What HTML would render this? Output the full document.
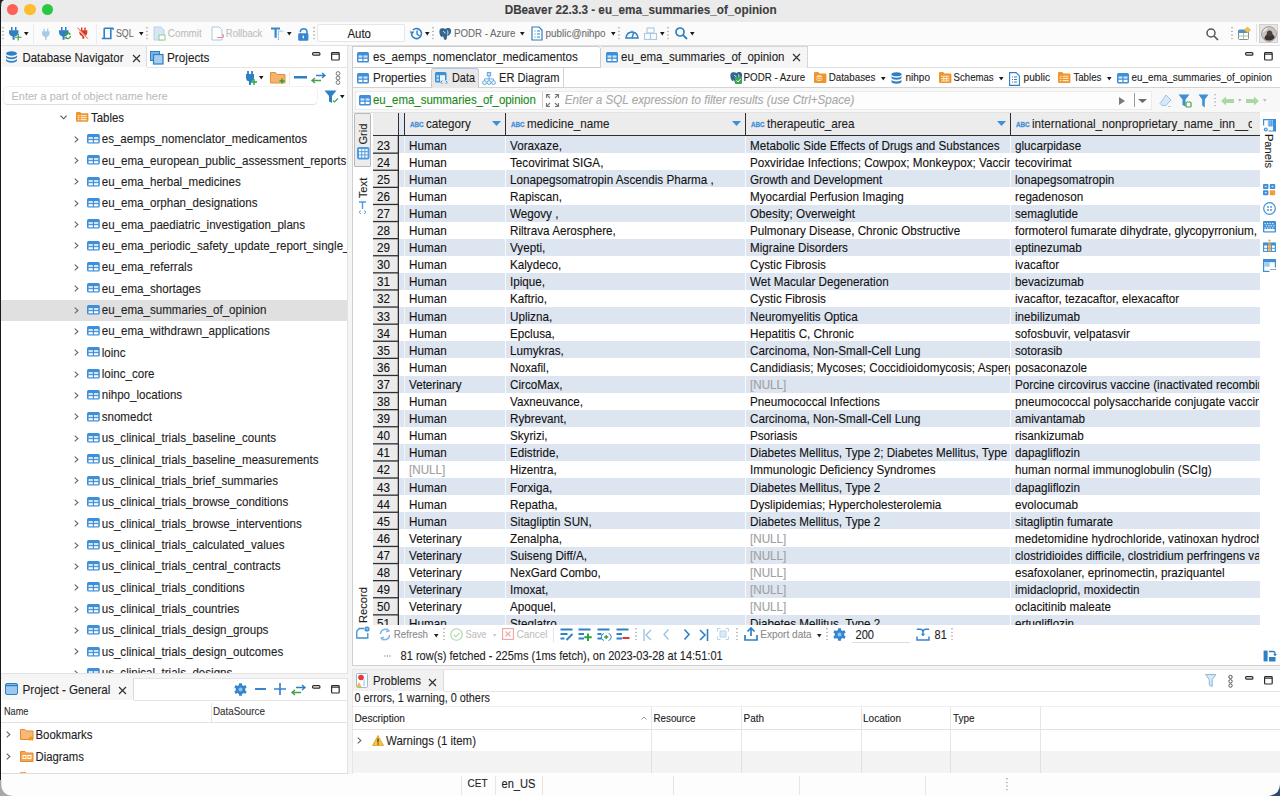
<!DOCTYPE html><html><head><meta charset="utf-8"><style>*{margin:0;padding:0}
html,body{width:1280px;height:796px;overflow:hidden;background:#efefef;font-family:"Liberation Sans",sans-serif;}
.a{position:absolute}
.t{position:absolute;white-space:nowrap;line-height:20px;height:20px;-webkit-text-stroke:0.1px currentColor;transform:scaleY(1.1);transform-origin:0 calc(10px + 0.3465em)}
svg{overflow:visible}
</style></head><body><div class="a" style="left:0px;top:0px;width:1280px;height:22px;background:#ebebeb;"></div>
<div class="a" style="left:7.3px;top:3.8px;width:11.2px;height:11.2px;border-radius:50%;background:#fe5f57;"></div>
<div class="a" style="left:24.4px;top:3.8px;width:11.2px;height:11.2px;border-radius:50%;background:#febc2e;"></div>
<div class="a" style="left:41.5px;top:3.8px;width:11.2px;height:11.2px;border-radius:50%;background:#28c840;"></div>
<div class="t" style="left:504.70px;top:-0.20px;font-size:11.71px;color:#3d3d3d;font-weight:bold;">DBeaver 22.3.3 - eu_ema_summaries_of_opinion</div>
<div class="a" style="left:0px;top:22px;width:1280px;height:23px;background:#fbfbfb;"></div>
<div class="a" style="left:0px;top:45px;width:1280px;height:1px;background:#e0e0e0;"></div>
<svg class="a" style="left:2px;top:27px;" width="2" height="13" viewBox="0 0 2 13"><circle cx="1" cy="0.8" r="0.7" fill="#8a8a8a"/><circle cx="1" cy="4.4" r="0.7" fill="#8a8a8a"/><circle cx="1" cy="8.0" r="0.7" fill="#8a8a8a"/><circle cx="1" cy="11.6" r="0.7" fill="#8a8a8a"/></svg>
<svg class="a" style="left:9px;top:26px;" width="12" height="14" viewBox="0 0 12 14"><rect x="2" y="1" width="1.5" height="3.5" fill="#2e7fc4"/><rect x="6" y="1" width="1.5" height="3.5" fill="#2e7fc4"/><path d="M0 4.2H9.5V6.3C9.5 8.6 7.8 10 5.6 10.6V13.7H3.6V10.6C1.4 10 0 8.6 0 6.3Z" fill="#2e7fc4"/></svg>
<svg class="a" style="left:14.5px;top:33.5px;" width="6.5" height="6.5" viewBox="0 0 6.5 6.5"><path d="M3.25 0v6.5M0 3.25h6.5" stroke="#3a9a3a" stroke-width="1.1"/></svg>
<svg class="a" style="left:24px;top:32px;" width="4.6" height="3.6" viewBox="0 0 4.6 3.6"><path d="M0 0H4.6L2.3 3.6Z" fill="#1a1a1a"/></svg>
<div class="a" style="left:33.3px;top:24.3px;width:1px;height:19.3px;background:#ececec;"></div>
<svg class="a" style="left:41.7px;top:27.5px;" width="8" height="12" viewBox="0 0 8 12"><rect x="1.5" y="0.5" width="1.3" height="3" fill="#a9cbe6"/><rect x="5" y="0.5" width="1.3" height="3" fill="#a9cbe6"/><path d="M0 3.2H7.6V5.5C7.6 7.4 6.3 8.6 4.6 9.1V11.8H3V9.1C1.3 8.6 0 7.4 0 5.5Z" fill="#a9cbe6"/></svg>
<svg class="a" style="left:59px;top:26px;" width="12" height="14" viewBox="0 0 12 14"><rect x="2" y="1" width="1.5" height="3.5" fill="#2e7fc4"/><rect x="6" y="1" width="1.5" height="3.5" fill="#2e7fc4"/><path d="M0 4.2H9.5V6.3C9.5 8.6 7.8 10 5.6 10.6V13.7H3.6V10.6C1.4 10 0 8.6 0 6.3Z" fill="#2e7fc4"/></svg>
<svg class="a" style="left:63.8px;top:32px;" width="7.5" height="7.5" viewBox="0 0 7.5 7.5"><path d="M1 3.5A2.8 2.8 0 0 1 6 2" fill="none" stroke="#3fa03f" stroke-width="1.3"/><path d="M6.5 4A2.8 2.8 0 0 1 1.5 5.5" fill="none" stroke="#3fa03f" stroke-width="1.3"/><path d="M5 0.5L7 2.2L4.6 3Z M2.5 7L0.5 5.3L2.9 4.5Z" fill="#3fa03f"/></svg>
<svg class="a" style="left:77px;top:27px;" width="11.5" height="12.5" viewBox="0 0 11.5 12.5"><rect x="4" y="0.5" width="1.4" height="3" fill="#d9381e"/><rect x="7.3" y="0.5" width="1.4" height="3" fill="#d9381e"/><path d="M2.3 3.2H10.3V5.6C10.3 7.6 8.9 8.8 7.3 9.3V11.8H5.4V9.3C3.7 8.8 2.3 7.6 2.3 5.6Z" fill="#d9381e"/><path d="M0.2 1L10.8 12" stroke="#fff" stroke-width="1.6"/><path d="M0.5 0.7L11 11.8" stroke="#d9381e" stroke-width="0.9"/></svg>
<div class="a" style="left:95.5px;top:24.3px;width:1px;height:19.3px;background:#ececec;"></div>
<svg class="a" style="left:101px;top:27px;" width="13" height="13" viewBox="0 0 13 13"><path d="M3.2 1.2H12.2M3.2 1.2V11.5M9.8 1.2V11.5H0.8" fill="none" stroke="#2e7fc4" stroke-width="1.6"/><path d="M12.2 1.2V2.8" stroke="#2e7fc4" stroke-width="1.6"/></svg>
<div class="t" style="left:116.00px;top:23.50px;font-size:8.75px;color:#6e6e6e;transform:scaleY(1.18);">SQL</div>
<svg class="a" style="left:139px;top:32px;" width="4.6" height="3.6" viewBox="0 0 4.6 3.6"><path d="M0 0H4.6L2.3 3.6Z" fill="#1a1a1a"/></svg>
<svg class="a" style="left:146px;top:27px;" width="2" height="13" viewBox="0 0 2 13"><circle cx="1" cy="0.8" r="0.7" fill="#8a8a8a"/><circle cx="1" cy="4.4" r="0.7" fill="#8a8a8a"/><circle cx="1" cy="8.0" r="0.7" fill="#8a8a8a"/><circle cx="1" cy="11.6" r="0.7" fill="#8a8a8a"/></svg>
<svg class="a" style="left:153px;top:26px;" width="13" height="15" viewBox="0 0 13 15"><path d="M1 1h7l3 3v10H1z" fill="#d6e6f5" stroke="#b8d2ea" stroke-width="1"/><rect x="6" y="9" width="6" height="5" fill="#fff" stroke="#8fd08f" stroke-width="1"/></svg>
<div class="t" style="left:167.80px;top:23.50px;font-size:9.87px;color:#bdbdbd;transform:scaleY(1.15);">Commit</div>
<svg class="a" style="left:211px;top:26px;" width="13" height="15" viewBox="0 0 13 15"><path d="M1 1h7l3 3v10H1z" fill="#fff" stroke="#a9c9e6" stroke-width="1"/><path d="M6 11.5h5a1.5 1.5 0 0 0 0-3" fill="none" stroke="#e58a8a" stroke-width="1.2"/></svg>
<div class="t" style="left:225.80px;top:23.50px;font-size:9.54px;color:#bdbdbd;transform:scaleY(1.15);">Rollback</div>
<svg class="a" style="left:271px;top:26.5px;" width="13" height="14" viewBox="0 0 13 14"><path d="M0 0.6H9V2.6H5.7V10.8H3.5V2.6H0Z" fill="#3585cf"/><path d="M7.4 3.7v9.5" stroke="#3585cf" stroke-width="0.9" stroke-dasharray="0.9 0.8"/><path d="M8.6 4.1H12.3" stroke="#3585cf" stroke-width="0.9" stroke-dasharray="0.9 0.8"/></svg>
<svg class="a" style="left:287px;top:32px;" width="4.6" height="3.6" viewBox="0 0 4.6 3.6"><path d="M0 0H4.6L2.3 3.6Z" fill="#1a1a1a"/></svg>
<svg class="a" style="left:297.8px;top:26.5px;" width="11" height="14" viewBox="0 0 11 14"><path d="M2.3 5.2V4.6A3.4 3.4 0 0 1 9 4.6V7" fill="none" stroke="#3585cf" stroke-width="1.5"/><rect x="0.2" y="6.3" width="10.2" height="7.4" rx="1.3" fill="#3585cf"/><rect x="4.6" y="8.4" width="1.4" height="3" rx="0.6" fill="#e8f4fd"/></svg>
<svg class="a" style="left:313px;top:27px;" width="2" height="13" viewBox="0 0 2 13"><circle cx="1" cy="0.8" r="0.7" fill="#8a8a8a"/><circle cx="1" cy="4.4" r="0.7" fill="#8a8a8a"/><circle cx="1" cy="8.0" r="0.7" fill="#8a8a8a"/><circle cx="1" cy="11.6" r="0.7" fill="#8a8a8a"/></svg>
<div class="a" style="left:317px;top:24px;width:88px;height:18px;background:#fff;border:1px solid #e6e6e6;box-sizing:border-box;border-radius:2px;"></div>
<div class="t" style="left:347.50px;top:23.50px;font-size:11.42px;color:#1a1a1a;">Auto</div>
<svg class="a" style="left:408.5px;top:27px;" width="14" height="13" viewBox="0 0 14 13"><path d="M2.5 6.5A5 5 0 1 0 4 3" fill="none" stroke="#2e7fc4" stroke-width="1.6"/><path d="M0.5 4.5L3 7.5L5.5 4.5Z" fill="#2e7fc4"/><path d="M8 3.5v3.5l2.5 2" fill="none" stroke="#2e7fc4" stroke-width="1.4"/></svg>
<svg class="a" style="left:425px;top:32px;" width="4.6" height="3.6" viewBox="0 0 4.6 3.6"><path d="M0 0H4.6L2.3 3.6Z" fill="#1a1a1a"/></svg>
<svg class="a" style="left:432px;top:27px;" width="2" height="13" viewBox="0 0 2 13"><circle cx="1" cy="0.8" r="0.7" fill="#8a8a8a"/><circle cx="1" cy="4.4" r="0.7" fill="#8a8a8a"/><circle cx="1" cy="8.0" r="0.7" fill="#8a8a8a"/><circle cx="1" cy="11.6" r="0.7" fill="#8a8a8a"/></svg>
<svg class="a" style="left:439px;top:26.5px;" width="13" height="14" viewBox="0 0 13 14"><path d="M2 1.5C0 2 0 6 1.5 9C2.5 11 3.5 10 4 8.5C4.5 11 5 13 6.5 13C8 13 8 10 8 8.5C9.5 9 11 8 12 5.5C12.5 3 11.5 1 9.5 1C8 1 7 1.5 6.5 2C5.5 1 3.5 1 2 1.5Z" fill="#336791"/><path d="M4 4.5c1 0 2 .5 2 2M8.5 3.5c.5 1.5.5 3 0 4" stroke="#fff" stroke-width="0.9" fill="none"/></svg>
<div class="t" style="left:454.00px;top:23.50px;font-size:9.71px;color:#6e6e6e;transform:scaleY(1.15);">PODR - Azure</div>
<svg class="a" style="left:520px;top:32px;" width="4.6" height="3.6" viewBox="0 0 4.6 3.6"><path d="M0 0H4.6L2.3 3.6Z" fill="#1a1a1a"/></svg>
<svg class="a" style="left:530.5px;top:26px;" width="12" height="15" viewBox="0 0 12 15"><path d="M1 1h7l3 3v10H1z" fill="#fff" stroke="#2e7fc4" stroke-width="1.2"/><path d="M3.5 5h1M3.5 8h1M3.5 11h1M6 5h3M6 8h3M6 11h3" stroke="#2e7fc4" stroke-width="1.2"/></svg>
<div class="t" style="left:545.60px;top:23.50px;font-size:9.88px;color:#6e6e6e;transform:scaleY(1.15);">public@nihpo</div>
<svg class="a" style="left:611px;top:32px;" width="4.6" height="3.6" viewBox="0 0 4.6 3.6"><path d="M0 0H4.6L2.3 3.6Z" fill="#1a1a1a"/></svg>
<svg class="a" style="left:618px;top:27px;" width="2" height="13" viewBox="0 0 2 13"><circle cx="1" cy="0.8" r="0.7" fill="#8a8a8a"/><circle cx="1" cy="4.4" r="0.7" fill="#8a8a8a"/><circle cx="1" cy="8.0" r="0.7" fill="#8a8a8a"/><circle cx="1" cy="11.6" r="0.7" fill="#8a8a8a"/></svg>
<svg class="a" style="left:624.5px;top:27px;" width="14" height="12" viewBox="0 0 14 12"><path d="M1 11A6 6 0 1 1 13 11Z" fill="none" stroke="#2e7fc4" stroke-width="1.6"/><path d="M7 11L8.5 6" stroke="#2e7fc4" stroke-width="1.4"/><path d="M7 3.5v1M3 5.5l.8.8M11 5.5l-.8.8" stroke="#2e7fc4" stroke-width="1"/></svg>
<svg class="a" style="left:644px;top:27px;" width="13" height="13" viewBox="0 0 13 13"><rect x="3" y="1" width="7" height="5" fill="none" stroke="#a9c9e6" stroke-width="1.1"/><rect x="0.5" y="6.5" width="6" height="6" fill="none" stroke="#a9c9e6" stroke-width="1.1"/><rect x="6.5" y="6.5" width="6" height="6" fill="none" stroke="#a9c9e6" stroke-width="1.1"/></svg>
<svg class="a" style="left:660px;top:32px;" width="4.6" height="3.6" viewBox="0 0 4.6 3.6"><path d="M0 0H4.6L2.3 3.6Z" fill="#1a1a1a"/></svg>
<svg class="a" style="left:667px;top:27px;" width="2" height="13" viewBox="0 0 2 13"><circle cx="1" cy="0.8" r="0.7" fill="#8a8a8a"/><circle cx="1" cy="4.4" r="0.7" fill="#8a8a8a"/><circle cx="1" cy="8.0" r="0.7" fill="#8a8a8a"/><circle cx="1" cy="11.6" r="0.7" fill="#8a8a8a"/></svg>
<svg class="a" style="left:674.5px;top:27px;" width="13" height="13" viewBox="0 0 13 13"><circle cx="5" cy="5" r="4" fill="none" stroke="#2e7fc4" stroke-width="1.7"/><path d="M8 8L12 12" stroke="#2e7fc4" stroke-width="1.8"/></svg>
<svg class="a" style="left:690px;top:32px;" width="4.6" height="3.6" viewBox="0 0 4.6 3.6"><path d="M0 0H4.6L2.3 3.6Z" fill="#1a1a1a"/></svg>
<svg class="a" style="left:1205.5px;top:27.5px;" width="13" height="13" viewBox="0 0 13 13"><circle cx="5" cy="5" r="4" fill="none" stroke="#555" stroke-width="1.5"/><path d="M8 8L12 12" stroke="#555" stroke-width="1.7"/></svg>
<svg class="a" style="left:1231px;top:27px;" width="2" height="13" viewBox="0 0 2 13"><circle cx="1" cy="0.8" r="0.7" fill="#8a8a8a"/><circle cx="1" cy="4.4" r="0.7" fill="#8a8a8a"/><circle cx="1" cy="8.0" r="0.7" fill="#8a8a8a"/><circle cx="1" cy="11.6" r="0.7" fill="#8a8a8a"/></svg>
<svg class="a" style="left:1238px;top:27px;" width="13" height="13" viewBox="0 0 13 13"><rect x="0.5" y="3" width="10" height="9.5" rx="1" fill="#fff" stroke="#888" stroke-width="1"/><rect x="0.5" y="3" width="10" height="3" fill="#4a90d9"/><path d="M0.5 9h10M5.5 6v6.5" stroke="#9c9" stroke-width="1"/><path d="M9.5 0L12.5 3L9.5 6L6.5 3Z" fill="#f3c04c" stroke="#d9a02a" stroke-width="0.6"/></svg>
<div class="a" style="left:1256px;top:24px;width:1px;height:18px;background:#e2e2e2;"></div>
<div class="a" style="left:1259px;top:24px;width:18.5px;height:18.5px;background:#e6e6e6;border:1px solid #d0d0d0;box-sizing:border-box;"></div>
<svg class="a" style="left:1260.5px;top:25.5px;" width="16" height="16" viewBox="0 0 16 16"><defs><clipPath id="av"><circle cx="8" cy="8" r="6.6"/></clipPath></defs><circle cx="8" cy="8" r="7.4" fill="#d8d4d2" stroke="#8a8280" stroke-width="0.8"/><g clip-path="url(#av)"><rect width="16" height="16" fill="#c9c2bf"/><path d="M3 16C3 11 5 8 8 7.5C11 7 13 9 14 12V16Z" fill="#3b3230"/><path d="M6 9C5 6 7 4 9 4.5C11 5 12 7 11 9.5C10 11 7 11 6 9Z" fill="#4a403c"/><path d="M2 6L6 2" stroke="#f4f0ee" stroke-width="1.5"/></g></svg>
<div class="a" style="left:0px;top:46px;width:1280px;height:750px;background:#f5f5f5;"></div>
<div class="a" style="left:0px;top:0px;width:1.3px;height:796px;background:#1a1a1a;"></div>
<div class="a" style="left:1.3px;top:45.5px;width:346.5px;height:628px;background:#fff;border-right:1px solid #e2e2e2;border-bottom:1px solid #e2e2e2;box-sizing:border-box;"></div>
<div class="a" style="left:2px;top:45.5px;width:144px;height:21.5px;background:#f6f6f6;"></div>
<div class="a" style="left:146px;top:46px;width:1px;height:21px;background:#dcdcdc;"></div>
<div class="a" style="left:147px;top:66.5px;width:200px;height:1px;background:#e4e4e4;"></div>
<svg class="a" style="left:5px;top:50.5px;" width="13" height="13" viewBox="0 0 13 13"><g fill="#2e7fc4"><ellipse cx="6.5" cy="2.5" rx="5.5" ry="2.2"/><path d="M1 4.2c0 1.2 2.5 2.2 5.5 2.2s5.5-1 5.5-2.2v1.8c0 1.2-2.5 2.2-5.5 2.2S1 7.2 1 6z"/><path d="M1 7.8c0 1.2 2.5 2.2 5.5 2.2s5.5-1 5.5-2.2v1.8c0 1.2-2.5 2.2-5.5 2.2S1 10.8 1 9.6z"/></g></svg>
<div class="t" style="left:22.50px;top:47.50px;font-size:11.43px;color:#1e1e1e;">Database Navigator</div>
<svg class="a" style="left:131.5px;top:54px;" width="9" height="9" viewBox="0 0 9 9"><path d="M1 1L8 8M8 1L1 8" stroke="#333" stroke-width="1.2"/></svg>
<svg class="a" style="left:150px;top:50.5px;" width="14" height="14" viewBox="0 0 14 14"><rect x="0.5" y="0.5" width="9" height="9" fill="#7fb4e3" stroke="#2e7fc4" stroke-width="1"/><rect x="3.5" y="3.5" width="9.5" height="9.5" fill="#a8cdef" stroke="#2e7fc4" stroke-width="1.2"/></svg>
<div class="t" style="left:167.00px;top:47.50px;font-size:11.77px;color:#1e1e1e;">Projects</div>
<svg class="a" style="left:312px;top:52px;" width="8.5" height="3.8" viewBox="0 0 8.5 3.8"><rect x="0.6" y="0.6" width="7.3" height="2.6" rx="1" fill="none" stroke="#2a2a2a" stroke-width="1.2"/></svg>
<svg class="a" style="left:331px;top:52px;" width="8.8" height="8.6" viewBox="0 0 8.8 8.6"><rect x="0.6" y="0.6" width="7.6" height="7.4" rx="0.8" fill="none" stroke="#2a2a2a" stroke-width="1.2"/><path d="M0.6 2.2h7.6" stroke="#2a2a2a" stroke-width="1.1"/></svg>
<svg class="a" style="left:245px;top:70.5px;" width="12" height="14" viewBox="0 0 12 14"><path d="M3 0v3M7 0v3" stroke="#2e7fc4" stroke-width="1.8"/><path d="M1 3h8v3.5a4 4 0 0 1-8 0z" fill="#2e7fc4"/><rect x="4" y="10" width="2" height="4" fill="#2e7fc4"/><path d="M9 8v6M6 11h6" stroke="#27a33b" stroke-width="1.4"/></svg>
<svg class="a" style="left:258.5px;top:75.5px;" width="4.5" height="3.5" viewBox="0 0 4.5 3.5"><path d="M0 0H4.5L2.25 3.5Z" fill="#1a1a1a"/></svg>
<svg class="a" style="left:269.5px;top:71px;" width="16" height="13" viewBox="0 0 16 13"><path d="M0.5 1.5h5l1.5 2h8v8.5H0.5z" fill="#f6b26b" stroke="#e69138" stroke-width="1"/><path d="M12 7.5v5M9.5 10h5" stroke="#27a33b" stroke-width="1.4"/></svg>
<div class="a" style="left:289px;top:71px;width:1px;height:14px;background:#e8e8e8;"></div>
<svg class="a" style="left:293.5px;top:76px;" width="13" height="3" viewBox="0 0 13 3"><rect width="13" height="2.5" fill="#2e7fc4"/></svg>
<svg class="a" style="left:311px;top:71.5px;" width="15" height="12" viewBox="0 0 15 12"><path d="M5 3.5h9M11 1l3 2.5L11 6" fill="none" stroke="#2e7fc4" stroke-width="1.4"/><path d="M10 8.5H1M4 6l-3 2.5L4 11" fill="none" stroke="#43a047" stroke-width="1.4"/></svg>
<svg class="a" style="left:334.5px;top:70.5px;" width="6" height="14" viewBox="0 0 6 14"><circle cx="3" cy="2.5" r="1.9" fill="none" stroke="#777" stroke-width="1"/><circle cx="3" cy="7" r="1.9" fill="none" stroke="#777" stroke-width="1"/><circle cx="3" cy="11.5" r="1.9" fill="none" stroke="#777" stroke-width="1"/></svg>
<div class="a" style="left:3.5px;top:87.3px;width:313px;height:16.6px;background:#fff;border-radius:4px;box-shadow:0 0 0 0.6px #e8e8e8, 0 0.8px 0.8px rgba(0,0,0,0.16);"></div>
<div class="t" style="left:11.60px;top:85.60px;font-size:10.88px;color:#bdbdbd;transform:scaleY(1.0);">Enter a part of object name here</div>
<svg class="a" style="left:324px;top:89.5px;" width="16" height="14" viewBox="0 0 16 14"><path d="M0.5 0.5h12L8 6v7L5 11.5V6z" fill="#2e7fc4"/><path d="M9 10.5l1.5 1.5L14 8.5" fill="none" stroke="#43a047" stroke-width="1.1"/></svg>
<svg class="a" style="left:340px;top:95px;" width="4.5" height="3.5" viewBox="0 0 4.5 3.5"><path d="M0 0H4.5L2.25 3.5Z" fill="#1a1a1a"/></svg>
<svg class="a" style="left:60.3px;top:115.3px;" width="7.5" height="5" viewBox="0 0 7.5 5"><path d="M0.6 0.6L3.6 3.8L6.6 0.6" fill="none" stroke="#555" stroke-width="1.1"/></svg>
<svg class="a" style="left:75.9px;top:112.2px;" width="12.4" height="9.8" viewBox="0 0 12.4 9.8"><path d="M0 1.2Q0 0 1.2 0H4.2L5.4 1.3H11.2Q12.4 1.3 12.4 2.5V8.6Q12.4 9.8 11.2 9.8H1.2Q0 9.8 0 8.6Z" fill="#f0952c"/><path d="M1.8 3.6h1.6M1.8 5.6h1.6M1.8 7.6h1.6M4.6 3.6h6M4.6 5.6h6M4.6 7.6h6" stroke="#fde6c8" stroke-width="1.1"/></svg>
<div class="t" style="left:91.00px;top:107.80px;font-size:11.42px;color:#1e1e1e;">Tables</div>
<div class="a" style="left:1.3px;top:106px;width:345.5px;height:567px;overflow:hidden;">
<svg class="a" style="left:72.4px;top:29.659999999999997px;" width="6" height="7" viewBox="0 0 6 7"><path d="M0.7 0.6L3.9 3.5L0.7 6.4" fill="none" stroke="#666" stroke-width="1.1"/></svg>
<svg class="a" style="left:85.7px;top:27.859999999999996px;" width="12.8" height="9.5" viewBox="0 0 12.8 9.5"><rect x="0" y="0" width="12.8" height="9.5" rx="1.5" fill="#3f8fd8"/><rect x="1.5" y="3" width="4.3" height="2.1" fill="#cfe5f7"/><rect x="7" y="3" width="4.3" height="2.1" fill="#cfe5f7"/><rect x="1.5" y="6.2" width="4.3" height="2.1" fill="#fff"/><rect x="7" y="6.2" width="4.3" height="2.1" fill="#fff"/></svg>
<div class="t" style="left:100.40px;top:23.16px;font-size:11.58px;color:#1e1e1e;white-space:nowrap;">es_aemps_nomenclator_medicamentos</div>
<svg class="a" style="left:72.4px;top:51.01999999999998px;" width="6" height="7" viewBox="0 0 6 7"><path d="M0.7 0.6L3.9 3.5L0.7 6.4" fill="none" stroke="#666" stroke-width="1.1"/></svg>
<svg class="a" style="left:85.7px;top:49.219999999999985px;" width="12.8" height="9.5" viewBox="0 0 12.8 9.5"><rect x="0" y="0" width="12.8" height="9.5" rx="1.5" fill="#3f8fd8"/><rect x="1.5" y="3" width="4.3" height="2.1" fill="#cfe5f7"/><rect x="7" y="3" width="4.3" height="2.1" fill="#cfe5f7"/><rect x="1.5" y="6.2" width="4.3" height="2.1" fill="#fff"/><rect x="7" y="6.2" width="4.3" height="2.1" fill="#fff"/></svg>
<div class="t" style="left:100.40px;top:44.52px;font-size:11.58px;color:#1e1e1e;white-space:nowrap;">eu_ema_european_public_assessment_reports</div>
<svg class="a" style="left:72.4px;top:72.38px;" width="6" height="7" viewBox="0 0 6 7"><path d="M0.7 0.6L3.9 3.5L0.7 6.4" fill="none" stroke="#666" stroke-width="1.1"/></svg>
<svg class="a" style="left:85.7px;top:70.58px;" width="12.8" height="9.5" viewBox="0 0 12.8 9.5"><rect x="0" y="0" width="12.8" height="9.5" rx="1.5" fill="#3f8fd8"/><rect x="1.5" y="3" width="4.3" height="2.1" fill="#cfe5f7"/><rect x="7" y="3" width="4.3" height="2.1" fill="#cfe5f7"/><rect x="1.5" y="6.2" width="4.3" height="2.1" fill="#fff"/><rect x="7" y="6.2" width="4.3" height="2.1" fill="#fff"/></svg>
<div class="t" style="left:100.40px;top:65.88px;font-size:11.58px;color:#1e1e1e;white-space:nowrap;">eu_ema_herbal_medicines</div>
<svg class="a" style="left:72.4px;top:93.74000000000001px;" width="6" height="7" viewBox="0 0 6 7"><path d="M0.7 0.6L3.9 3.5L0.7 6.4" fill="none" stroke="#666" stroke-width="1.1"/></svg>
<svg class="a" style="left:85.7px;top:91.94000000000001px;" width="12.8" height="9.5" viewBox="0 0 12.8 9.5"><rect x="0" y="0" width="12.8" height="9.5" rx="1.5" fill="#3f8fd8"/><rect x="1.5" y="3" width="4.3" height="2.1" fill="#cfe5f7"/><rect x="7" y="3" width="4.3" height="2.1" fill="#cfe5f7"/><rect x="1.5" y="6.2" width="4.3" height="2.1" fill="#fff"/><rect x="7" y="6.2" width="4.3" height="2.1" fill="#fff"/></svg>
<div class="t" style="left:100.40px;top:87.24px;font-size:11.58px;color:#1e1e1e;white-space:nowrap;">eu_ema_orphan_designations</div>
<svg class="a" style="left:72.4px;top:115.1px;" width="6" height="7" viewBox="0 0 6 7"><path d="M0.7 0.6L3.9 3.5L0.7 6.4" fill="none" stroke="#666" stroke-width="1.1"/></svg>
<svg class="a" style="left:85.7px;top:113.3px;" width="12.8" height="9.5" viewBox="0 0 12.8 9.5"><rect x="0" y="0" width="12.8" height="9.5" rx="1.5" fill="#3f8fd8"/><rect x="1.5" y="3" width="4.3" height="2.1" fill="#cfe5f7"/><rect x="7" y="3" width="4.3" height="2.1" fill="#cfe5f7"/><rect x="1.5" y="6.2" width="4.3" height="2.1" fill="#fff"/><rect x="7" y="6.2" width="4.3" height="2.1" fill="#fff"/></svg>
<div class="t" style="left:100.40px;top:108.60px;font-size:11.58px;color:#1e1e1e;white-space:nowrap;">eu_ema_paediatric_investigation_plans</div>
<svg class="a" style="left:72.4px;top:136.45999999999998px;" width="6" height="7" viewBox="0 0 6 7"><path d="M0.7 0.6L3.9 3.5L0.7 6.4" fill="none" stroke="#666" stroke-width="1.1"/></svg>
<svg class="a" style="left:85.7px;top:134.65999999999997px;" width="12.8" height="9.5" viewBox="0 0 12.8 9.5"><rect x="0" y="0" width="12.8" height="9.5" rx="1.5" fill="#3f8fd8"/><rect x="1.5" y="3" width="4.3" height="2.1" fill="#cfe5f7"/><rect x="7" y="3" width="4.3" height="2.1" fill="#cfe5f7"/><rect x="1.5" y="6.2" width="4.3" height="2.1" fill="#fff"/><rect x="7" y="6.2" width="4.3" height="2.1" fill="#fff"/></svg>
<div class="t" style="left:100.40px;top:129.96px;font-size:11.58px;color:#1e1e1e;white-space:nowrap;">eu_ema_periodic_safety_update_report_single_assessments</div>
<svg class="a" style="left:72.4px;top:157.82px;" width="6" height="7" viewBox="0 0 6 7"><path d="M0.7 0.6L3.9 3.5L0.7 6.4" fill="none" stroke="#666" stroke-width="1.1"/></svg>
<svg class="a" style="left:85.7px;top:156.01999999999998px;" width="12.8" height="9.5" viewBox="0 0 12.8 9.5"><rect x="0" y="0" width="12.8" height="9.5" rx="1.5" fill="#3f8fd8"/><rect x="1.5" y="3" width="4.3" height="2.1" fill="#cfe5f7"/><rect x="7" y="3" width="4.3" height="2.1" fill="#cfe5f7"/><rect x="1.5" y="6.2" width="4.3" height="2.1" fill="#fff"/><rect x="7" y="6.2" width="4.3" height="2.1" fill="#fff"/></svg>
<div class="t" style="left:100.40px;top:151.32px;font-size:11.58px;color:#1e1e1e;white-space:nowrap;">eu_ema_referrals</div>
<svg class="a" style="left:72.4px;top:179.18px;" width="6" height="7" viewBox="0 0 6 7"><path d="M0.7 0.6L3.9 3.5L0.7 6.4" fill="none" stroke="#666" stroke-width="1.1"/></svg>
<svg class="a" style="left:85.7px;top:177.38px;" width="12.8" height="9.5" viewBox="0 0 12.8 9.5"><rect x="0" y="0" width="12.8" height="9.5" rx="1.5" fill="#3f8fd8"/><rect x="1.5" y="3" width="4.3" height="2.1" fill="#cfe5f7"/><rect x="7" y="3" width="4.3" height="2.1" fill="#cfe5f7"/><rect x="1.5" y="6.2" width="4.3" height="2.1" fill="#fff"/><rect x="7" y="6.2" width="4.3" height="2.1" fill="#fff"/></svg>
<div class="t" style="left:100.40px;top:172.68px;font-size:11.58px;color:#1e1e1e;white-space:nowrap;">eu_ema_shortages</div>
<div class="a" style="left:0px;top:194.44px;width:345.5px;height:20.6px;background:#e0e0e0;"></div>
<svg class="a" style="left:72.4px;top:200.54000000000002px;" width="6" height="7" viewBox="0 0 6 7"><path d="M0.7 0.6L3.9 3.5L0.7 6.4" fill="none" stroke="#666" stroke-width="1.1"/></svg>
<svg class="a" style="left:85.7px;top:198.74px;" width="12.8" height="9.5" viewBox="0 0 12.8 9.5"><rect x="0" y="0" width="12.8" height="9.5" rx="1.5" fill="#3f8fd8"/><rect x="1.5" y="3" width="4.3" height="2.1" fill="#cfe5f7"/><rect x="7" y="3" width="4.3" height="2.1" fill="#cfe5f7"/><rect x="1.5" y="6.2" width="4.3" height="2.1" fill="#fff"/><rect x="7" y="6.2" width="4.3" height="2.1" fill="#fff"/></svg>
<div class="t" style="left:100.40px;top:194.04px;font-size:11.58px;color:#1e1e1e;white-space:nowrap;">eu_ema_summaries_of_opinion</div>
<svg class="a" style="left:72.4px;top:221.89999999999998px;" width="6" height="7" viewBox="0 0 6 7"><path d="M0.7 0.6L3.9 3.5L0.7 6.4" fill="none" stroke="#666" stroke-width="1.1"/></svg>
<svg class="a" style="left:85.7px;top:220.09999999999997px;" width="12.8" height="9.5" viewBox="0 0 12.8 9.5"><rect x="0" y="0" width="12.8" height="9.5" rx="1.5" fill="#3f8fd8"/><rect x="1.5" y="3" width="4.3" height="2.1" fill="#cfe5f7"/><rect x="7" y="3" width="4.3" height="2.1" fill="#cfe5f7"/><rect x="1.5" y="6.2" width="4.3" height="2.1" fill="#fff"/><rect x="7" y="6.2" width="4.3" height="2.1" fill="#fff"/></svg>
<div class="t" style="left:100.40px;top:215.40px;font-size:11.58px;color:#1e1e1e;white-space:nowrap;">eu_ema_withdrawn_applications</div>
<svg class="a" style="left:72.4px;top:243.26px;" width="6" height="7" viewBox="0 0 6 7"><path d="M0.7 0.6L3.9 3.5L0.7 6.4" fill="none" stroke="#666" stroke-width="1.1"/></svg>
<svg class="a" style="left:85.7px;top:241.45999999999998px;" width="12.8" height="9.5" viewBox="0 0 12.8 9.5"><rect x="0" y="0" width="12.8" height="9.5" rx="1.5" fill="#3f8fd8"/><rect x="1.5" y="3" width="4.3" height="2.1" fill="#cfe5f7"/><rect x="7" y="3" width="4.3" height="2.1" fill="#cfe5f7"/><rect x="1.5" y="6.2" width="4.3" height="2.1" fill="#fff"/><rect x="7" y="6.2" width="4.3" height="2.1" fill="#fff"/></svg>
<div class="t" style="left:100.40px;top:236.76px;font-size:11.58px;color:#1e1e1e;white-space:nowrap;">loinc</div>
<svg class="a" style="left:72.4px;top:264.62px;" width="6" height="7" viewBox="0 0 6 7"><path d="M0.7 0.6L3.9 3.5L0.7 6.4" fill="none" stroke="#666" stroke-width="1.1"/></svg>
<svg class="a" style="left:85.7px;top:262.82px;" width="12.8" height="9.5" viewBox="0 0 12.8 9.5"><rect x="0" y="0" width="12.8" height="9.5" rx="1.5" fill="#3f8fd8"/><rect x="1.5" y="3" width="4.3" height="2.1" fill="#cfe5f7"/><rect x="7" y="3" width="4.3" height="2.1" fill="#cfe5f7"/><rect x="1.5" y="6.2" width="4.3" height="2.1" fill="#fff"/><rect x="7" y="6.2" width="4.3" height="2.1" fill="#fff"/></svg>
<div class="t" style="left:100.40px;top:258.12px;font-size:11.58px;color:#1e1e1e;white-space:nowrap;">loinc_core</div>
<svg class="a" style="left:72.4px;top:285.98px;" width="6" height="7" viewBox="0 0 6 7"><path d="M0.7 0.6L3.9 3.5L0.7 6.4" fill="none" stroke="#666" stroke-width="1.1"/></svg>
<svg class="a" style="left:85.7px;top:284.18px;" width="12.8" height="9.5" viewBox="0 0 12.8 9.5"><rect x="0" y="0" width="12.8" height="9.5" rx="1.5" fill="#3f8fd8"/><rect x="1.5" y="3" width="4.3" height="2.1" fill="#cfe5f7"/><rect x="7" y="3" width="4.3" height="2.1" fill="#cfe5f7"/><rect x="1.5" y="6.2" width="4.3" height="2.1" fill="#fff"/><rect x="7" y="6.2" width="4.3" height="2.1" fill="#fff"/></svg>
<div class="t" style="left:100.40px;top:279.48px;font-size:11.58px;color:#1e1e1e;white-space:nowrap;">nihpo_locations</div>
<svg class="a" style="left:72.4px;top:307.34px;" width="6" height="7" viewBox="0 0 6 7"><path d="M0.7 0.6L3.9 3.5L0.7 6.4" fill="none" stroke="#666" stroke-width="1.1"/></svg>
<svg class="a" style="left:85.7px;top:305.53999999999996px;" width="12.8" height="9.5" viewBox="0 0 12.8 9.5"><rect x="0" y="0" width="12.8" height="9.5" rx="1.5" fill="#3f8fd8"/><rect x="1.5" y="3" width="4.3" height="2.1" fill="#cfe5f7"/><rect x="7" y="3" width="4.3" height="2.1" fill="#cfe5f7"/><rect x="1.5" y="6.2" width="4.3" height="2.1" fill="#fff"/><rect x="7" y="6.2" width="4.3" height="2.1" fill="#fff"/></svg>
<div class="t" style="left:100.40px;top:300.84px;font-size:11.58px;color:#1e1e1e;white-space:nowrap;">snomedct</div>
<svg class="a" style="left:72.4px;top:328.7px;" width="6" height="7" viewBox="0 0 6 7"><path d="M0.7 0.6L3.9 3.5L0.7 6.4" fill="none" stroke="#666" stroke-width="1.1"/></svg>
<svg class="a" style="left:85.7px;top:326.9px;" width="12.8" height="9.5" viewBox="0 0 12.8 9.5"><rect x="0" y="0" width="12.8" height="9.5" rx="1.5" fill="#3f8fd8"/><rect x="1.5" y="3" width="4.3" height="2.1" fill="#cfe5f7"/><rect x="7" y="3" width="4.3" height="2.1" fill="#cfe5f7"/><rect x="1.5" y="6.2" width="4.3" height="2.1" fill="#fff"/><rect x="7" y="6.2" width="4.3" height="2.1" fill="#fff"/></svg>
<div class="t" style="left:100.40px;top:322.20px;font-size:11.58px;color:#1e1e1e;white-space:nowrap;">us_clinical_trials_baseline_counts</div>
<svg class="a" style="left:72.4px;top:350.06px;" width="6" height="7" viewBox="0 0 6 7"><path d="M0.7 0.6L3.9 3.5L0.7 6.4" fill="none" stroke="#666" stroke-width="1.1"/></svg>
<svg class="a" style="left:85.7px;top:348.26px;" width="12.8" height="9.5" viewBox="0 0 12.8 9.5"><rect x="0" y="0" width="12.8" height="9.5" rx="1.5" fill="#3f8fd8"/><rect x="1.5" y="3" width="4.3" height="2.1" fill="#cfe5f7"/><rect x="7" y="3" width="4.3" height="2.1" fill="#cfe5f7"/><rect x="1.5" y="6.2" width="4.3" height="2.1" fill="#fff"/><rect x="7" y="6.2" width="4.3" height="2.1" fill="#fff"/></svg>
<div class="t" style="left:100.40px;top:343.56px;font-size:11.58px;color:#1e1e1e;white-space:nowrap;">us_clinical_trials_baseline_measurements</div>
<svg class="a" style="left:72.4px;top:371.42px;" width="6" height="7" viewBox="0 0 6 7"><path d="M0.7 0.6L3.9 3.5L0.7 6.4" fill="none" stroke="#666" stroke-width="1.1"/></svg>
<svg class="a" style="left:85.7px;top:369.62px;" width="12.8" height="9.5" viewBox="0 0 12.8 9.5"><rect x="0" y="0" width="12.8" height="9.5" rx="1.5" fill="#3f8fd8"/><rect x="1.5" y="3" width="4.3" height="2.1" fill="#cfe5f7"/><rect x="7" y="3" width="4.3" height="2.1" fill="#cfe5f7"/><rect x="1.5" y="6.2" width="4.3" height="2.1" fill="#fff"/><rect x="7" y="6.2" width="4.3" height="2.1" fill="#fff"/></svg>
<div class="t" style="left:100.40px;top:364.92px;font-size:11.58px;color:#1e1e1e;white-space:nowrap;">us_clinical_trials_brief_summaries</div>
<svg class="a" style="left:72.4px;top:392.78000000000003px;" width="6" height="7" viewBox="0 0 6 7"><path d="M0.7 0.6L3.9 3.5L0.7 6.4" fill="none" stroke="#666" stroke-width="1.1"/></svg>
<svg class="a" style="left:85.7px;top:390.98px;" width="12.8" height="9.5" viewBox="0 0 12.8 9.5"><rect x="0" y="0" width="12.8" height="9.5" rx="1.5" fill="#3f8fd8"/><rect x="1.5" y="3" width="4.3" height="2.1" fill="#cfe5f7"/><rect x="7" y="3" width="4.3" height="2.1" fill="#cfe5f7"/><rect x="1.5" y="6.2" width="4.3" height="2.1" fill="#fff"/><rect x="7" y="6.2" width="4.3" height="2.1" fill="#fff"/></svg>
<div class="t" style="left:100.40px;top:386.28px;font-size:11.58px;color:#1e1e1e;white-space:nowrap;">us_clinical_trials_browse_conditions</div>
<svg class="a" style="left:72.4px;top:414.14px;" width="6" height="7" viewBox="0 0 6 7"><path d="M0.7 0.6L3.9 3.5L0.7 6.4" fill="none" stroke="#666" stroke-width="1.1"/></svg>
<svg class="a" style="left:85.7px;top:412.34px;" width="12.8" height="9.5" viewBox="0 0 12.8 9.5"><rect x="0" y="0" width="12.8" height="9.5" rx="1.5" fill="#3f8fd8"/><rect x="1.5" y="3" width="4.3" height="2.1" fill="#cfe5f7"/><rect x="7" y="3" width="4.3" height="2.1" fill="#cfe5f7"/><rect x="1.5" y="6.2" width="4.3" height="2.1" fill="#fff"/><rect x="7" y="6.2" width="4.3" height="2.1" fill="#fff"/></svg>
<div class="t" style="left:100.40px;top:407.64px;font-size:11.58px;color:#1e1e1e;white-space:nowrap;">us_clinical_trials_browse_interventions</div>
<svg class="a" style="left:72.4px;top:435.5px;" width="6" height="7" viewBox="0 0 6 7"><path d="M0.7 0.6L3.9 3.5L0.7 6.4" fill="none" stroke="#666" stroke-width="1.1"/></svg>
<svg class="a" style="left:85.7px;top:433.7px;" width="12.8" height="9.5" viewBox="0 0 12.8 9.5"><rect x="0" y="0" width="12.8" height="9.5" rx="1.5" fill="#3f8fd8"/><rect x="1.5" y="3" width="4.3" height="2.1" fill="#cfe5f7"/><rect x="7" y="3" width="4.3" height="2.1" fill="#cfe5f7"/><rect x="1.5" y="6.2" width="4.3" height="2.1" fill="#fff"/><rect x="7" y="6.2" width="4.3" height="2.1" fill="#fff"/></svg>
<div class="t" style="left:100.40px;top:429.00px;font-size:11.58px;color:#1e1e1e;white-space:nowrap;">us_clinical_trials_calculated_values</div>
<svg class="a" style="left:72.4px;top:456.86px;" width="6" height="7" viewBox="0 0 6 7"><path d="M0.7 0.6L3.9 3.5L0.7 6.4" fill="none" stroke="#666" stroke-width="1.1"/></svg>
<svg class="a" style="left:85.7px;top:455.06px;" width="12.8" height="9.5" viewBox="0 0 12.8 9.5"><rect x="0" y="0" width="12.8" height="9.5" rx="1.5" fill="#3f8fd8"/><rect x="1.5" y="3" width="4.3" height="2.1" fill="#cfe5f7"/><rect x="7" y="3" width="4.3" height="2.1" fill="#cfe5f7"/><rect x="1.5" y="6.2" width="4.3" height="2.1" fill="#fff"/><rect x="7" y="6.2" width="4.3" height="2.1" fill="#fff"/></svg>
<div class="t" style="left:100.40px;top:450.36px;font-size:11.58px;color:#1e1e1e;white-space:nowrap;">us_clinical_trials_central_contracts</div>
<svg class="a" style="left:72.4px;top:478.2199999999999px;" width="6" height="7" viewBox="0 0 6 7"><path d="M0.7 0.6L3.9 3.5L0.7 6.4" fill="none" stroke="#666" stroke-width="1.1"/></svg>
<svg class="a" style="left:85.7px;top:476.4199999999999px;" width="12.8" height="9.5" viewBox="0 0 12.8 9.5"><rect x="0" y="0" width="12.8" height="9.5" rx="1.5" fill="#3f8fd8"/><rect x="1.5" y="3" width="4.3" height="2.1" fill="#cfe5f7"/><rect x="7" y="3" width="4.3" height="2.1" fill="#cfe5f7"/><rect x="1.5" y="6.2" width="4.3" height="2.1" fill="#fff"/><rect x="7" y="6.2" width="4.3" height="2.1" fill="#fff"/></svg>
<div class="t" style="left:100.40px;top:471.72px;font-size:11.58px;color:#1e1e1e;white-space:nowrap;">us_clinical_trials_conditions</div>
<svg class="a" style="left:72.4px;top:499.5799999999999px;" width="6" height="7" viewBox="0 0 6 7"><path d="M0.7 0.6L3.9 3.5L0.7 6.4" fill="none" stroke="#666" stroke-width="1.1"/></svg>
<svg class="a" style="left:85.7px;top:497.7799999999999px;" width="12.8" height="9.5" viewBox="0 0 12.8 9.5"><rect x="0" y="0" width="12.8" height="9.5" rx="1.5" fill="#3f8fd8"/><rect x="1.5" y="3" width="4.3" height="2.1" fill="#cfe5f7"/><rect x="7" y="3" width="4.3" height="2.1" fill="#cfe5f7"/><rect x="1.5" y="6.2" width="4.3" height="2.1" fill="#fff"/><rect x="7" y="6.2" width="4.3" height="2.1" fill="#fff"/></svg>
<div class="t" style="left:100.40px;top:493.08px;font-size:11.58px;color:#1e1e1e;white-space:nowrap;">us_clinical_trials_countries</div>
<svg class="a" style="left:72.4px;top:520.9399999999999px;" width="6" height="7" viewBox="0 0 6 7"><path d="M0.7 0.6L3.9 3.5L0.7 6.4" fill="none" stroke="#666" stroke-width="1.1"/></svg>
<svg class="a" style="left:85.7px;top:519.14px;" width="12.8" height="9.5" viewBox="0 0 12.8 9.5"><rect x="0" y="0" width="12.8" height="9.5" rx="1.5" fill="#3f8fd8"/><rect x="1.5" y="3" width="4.3" height="2.1" fill="#cfe5f7"/><rect x="7" y="3" width="4.3" height="2.1" fill="#cfe5f7"/><rect x="1.5" y="6.2" width="4.3" height="2.1" fill="#fff"/><rect x="7" y="6.2" width="4.3" height="2.1" fill="#fff"/></svg>
<div class="t" style="left:100.40px;top:514.44px;font-size:11.58px;color:#1e1e1e;white-space:nowrap;">us_clinical_trials_design_groups</div>
<svg class="a" style="left:72.4px;top:542.3px;" width="6" height="7" viewBox="0 0 6 7"><path d="M0.7 0.6L3.9 3.5L0.7 6.4" fill="none" stroke="#666" stroke-width="1.1"/></svg>
<svg class="a" style="left:85.7px;top:540.5px;" width="12.8" height="9.5" viewBox="0 0 12.8 9.5"><rect x="0" y="0" width="12.8" height="9.5" rx="1.5" fill="#3f8fd8"/><rect x="1.5" y="3" width="4.3" height="2.1" fill="#cfe5f7"/><rect x="7" y="3" width="4.3" height="2.1" fill="#cfe5f7"/><rect x="1.5" y="6.2" width="4.3" height="2.1" fill="#fff"/><rect x="7" y="6.2" width="4.3" height="2.1" fill="#fff"/></svg>
<div class="t" style="left:100.40px;top:535.80px;font-size:11.58px;color:#1e1e1e;white-space:nowrap;">us_clinical_trials_design_outcomes</div>
<svg class="a" style="left:72.4px;top:563.66px;" width="6" height="7" viewBox="0 0 6 7"><path d="M0.7 0.6L3.9 3.5L0.7 6.4" fill="none" stroke="#666" stroke-width="1.1"/></svg>
<svg class="a" style="left:85.7px;top:561.86px;" width="12.8" height="9.5" viewBox="0 0 12.8 9.5"><rect x="0" y="0" width="12.8" height="9.5" rx="1.5" fill="#3f8fd8"/><rect x="1.5" y="3" width="4.3" height="2.1" fill="#cfe5f7"/><rect x="7" y="3" width="4.3" height="2.1" fill="#cfe5f7"/><rect x="1.5" y="6.2" width="4.3" height="2.1" fill="#fff"/><rect x="7" y="6.2" width="4.3" height="2.1" fill="#fff"/></svg>
<div class="t" style="left:100.40px;top:557.16px;font-size:11.58px;color:#1e1e1e;white-space:nowrap;">us_clinical_trials_designs</div>
</div>
<div class="a" style="left:1.3px;top:678px;width:346.5px;height:95px;background:#fff;border-right:1px solid #e2e2e2;border-top:1px solid #e4e4e4;box-sizing:border-box;"></div>
<div class="a" style="left:2px;top:678px;width:131px;height:22px;background:#f6f6f6;"></div>
<div class="a" style="left:133px;top:678.5px;width:1px;height:21.5px;background:#dcdcdc;"></div>
<div class="a" style="left:134px;top:699.5px;width:213px;height:1px;background:#e4e4e4;"></div>
<svg class="a" style="left:5px;top:683px;" width="13" height="12" viewBox="0 0 13 12"><rect x="0.5" y="0.5" width="12" height="11" rx="1.5" fill="#9cc8ef" stroke="#2e7fc4" stroke-width="1"/><path d="M0.5 2.5h12" stroke="#2e7fc4" stroke-width="1.5"/></svg>
<div class="t" style="left:22.50px;top:680.00px;font-size:11.64px;color:#1e1e1e;">Project - General</div>
<svg class="a" style="left:117.5px;top:685.5px;" width="9" height="9" viewBox="0 0 9 9"><path d="M1 1L8 8M8 1L1 8" stroke="#333" stroke-width="1.2"/></svg>
<svg class="a" style="left:233.5px;top:682.5px;" width="13" height="13" viewBox="0 0 13 13"><path d="M4.97 1.94L5.08 0.16L7.92 0.16L8.03 1.94L9.68 2.89L11.28 2.10L12.70 4.56L11.22 5.55L11.22 7.45L12.70 8.44L11.28 10.90L9.68 10.11L8.03 11.06L7.92 12.84L5.08 12.84L4.97 11.06L3.32 10.11L1.72 10.90L0.30 8.44L1.78 7.45L1.78 5.55L0.30 4.56L1.72 2.10L3.32 2.89Z" fill="#3585cf"/><circle cx="6.5" cy="6.5" r="3.25" fill="#3585cf"/><circle cx="6.5" cy="6.5" r="1.95" fill="#8fc3ee"/></svg>
<svg class="a" style="left:255px;top:688px;" width="11" height="2.2" viewBox="0 0 11 2.2"><rect width="11" height="2" fill="#3585cf"/></svg>
<svg class="a" style="left:274px;top:683px;" width="12" height="12" viewBox="0 0 12 12"><path d="M6 0v12M0 6h12" stroke="#3585cf" stroke-width="1.7"/></svg>
<svg class="a" style="left:291px;top:683.5px;" width="15" height="12" viewBox="0 0 15 12"><path d="M5 3.5h9M11 1l3 2.5L11 6" fill="none" stroke="#2e7fc4" stroke-width="1.4"/><path d="M10 8.5H1M4 6l-3 2.5L4 11" fill="none" stroke="#43a047" stroke-width="1.4"/></svg>
<svg class="a" style="left:312px;top:684.8px;" width="8.5" height="3.8" viewBox="0 0 8.5 3.8"><rect x="0.6" y="0.6" width="7.3" height="2.6" rx="1" fill="none" stroke="#2a2a2a" stroke-width="1.2"/></svg>
<svg class="a" style="left:331px;top:684.8px;" width="8.8" height="8.6" viewBox="0 0 8.8 8.6"><rect x="0.6" y="0.6" width="7.6" height="7.4" rx="0.8" fill="none" stroke="#2a2a2a" stroke-width="1.2"/><path d="M0.6 2.2h7.6" stroke="#2a2a2a" stroke-width="1.1"/></svg>
<div class="a" style="left:211px;top:703px;width:1px;height:19px;background:#e6e6e6;"></div>
<div class="a" style="left:1.3px;top:722px;width:346px;height:1px;background:#e2e2e2;"></div>
<div class="t" style="left:4.00px;top:702.00px;font-size:9.19px;color:#333;">Name</div>
<div class="t" style="left:213.00px;top:702.00px;font-size:9.85px;color:#333;">DataSource</div>
<svg class="a" style="left:6px;top:731.0px;" width="6" height="7" viewBox="0 0 6 7"><path d="M0.7 0.6L3.9 3.5L0.7 6.4" fill="none" stroke="#666" stroke-width="1.1"/></svg>
<svg class="a" style="left:20px;top:728px;" width="14" height="13" viewBox="0 0 14 13"><path d="M0.5 1.5h4.5l1.5 1.5h6.5v8.5H0.5z" fill="#f9b77a" stroke="#e8892f" stroke-width="1"/><path d="M11 7.5l0.9 1.8 2 .3-1.4 1.4.3 2-1.8-.9-1.8.9.3-2-1.4-1.4 2-.3z" fill="#f39c12"/></svg>
<div class="t" style="left:35.50px;top:725.00px;font-size:11.40px;color:#1e1e1e;">Bookmarks</div>
<svg class="a" style="left:6px;top:752.5px;" width="6" height="7" viewBox="0 0 6 7"><path d="M0.7 0.6L3.9 3.5L0.7 6.4" fill="none" stroke="#666" stroke-width="1.1"/></svg>
<svg class="a" style="left:20px;top:750px;" width="14" height="12" viewBox="0 0 14 12"><path d="M0.5 1.5h4.5l1.5 1.5h6.5v8.5H0.5z" fill="#f6a54a" stroke="#e8892f" stroke-width="1"/><rect x="3" y="5.5" width="3" height="3" fill="none" stroke="#fff" stroke-width="1"/><rect x="8" y="5.5" width="3" height="3" fill="none" stroke="#fff" stroke-width="1"/></svg>
<div class="t" style="left:35.50px;top:746.50px;font-size:11.34px;color:#1e1e1e;">Diagrams</div>
<svg class="a" style="left:20px;top:771.5px;" width="6" height="1.5" viewBox="0 0 6 1.5"><rect width="6" height="1.5" fill="#f6a54a"/></svg>
<div class="a" style="left:0px;top:773.5px;width:1280px;height:22.5px;background:#fdfdfd;"></div>
<div class="a" style="left:1.3px;top:773px;width:346.5px;height:1px;background:#dedede;"></div>
<div class="a" style="left:461px;top:776px;width:1px;height:19px;background:#e6e6e6;"></div>
<div class="a" style="left:495px;top:776px;width:1px;height:19px;background:#e6e6e6;"></div>
<div class="a" style="left:541.5px;top:776px;width:1px;height:19px;background:#e6e6e6;"></div>
<div class="a" style="left:673.4px;top:776px;width:1px;height:19px;background:#e6e6e6;"></div>
<div class="a" style="left:799px;top:776px;width:1px;height:19px;background:#e6e6e6;"></div>
<div class="a" style="left:925px;top:776px;width:1px;height:19px;background:#e6e6e6;"></div>
<div class="t" style="left:467.50px;top:774.00px;font-size:10.00px;color:#1e1e1e;">CET</div>
<div class="t" style="left:501.50px;top:774.00px;font-size:11.12px;color:#1e1e1e;">en_US</div>
<svg class="a" style="left:1005.5px;top:778px;" width="2" height="12" viewBox="0 0 2 12"><circle cx="1" cy="0.8" r="0.7" fill="#8a8a8a"/><circle cx="1" cy="4.4" r="0.7" fill="#8a8a8a"/><circle cx="1" cy="8.0" r="0.7" fill="#8a8a8a"/><circle cx="1" cy="11.6" r="0.7" fill="#8a8a8a"/></svg>
<div class="a" style="left:0px;top:0px;width:1.3px;height:780px;background:#1a1a1a;"></div>
<svg class="a" style="left:0px;top:0px;" width="6" height="6" viewBox="0 0 6 6"><path d="M0 0H4Q1.2 1.2 1.2 4V6H0Z" fill="#222"/></svg>
<svg class="a" style="left:0px;top:780px;" width="14" height="16" viewBox="0 0 14 16"><path d="M0 0H1.3V4Q1.3 15 13 16H0Z" fill="#a8a8a8"/></svg>
<svg class="a" style="left:1266px;top:780px;" width="14" height="16" viewBox="0 0 14 16"><path d="M14 0V4Q14 15 2 16H14Z" fill="#2f4a6e"/></svg>
<div class="a" style="left:352px;top:45.5px;width:928px;height:620px;background:#fff;border-left:1px solid #cfcfcf;border-bottom:1px solid #cfcfcf;box-sizing:border-box;"></div>
<div class="a" style="left:352px;top:45.5px;width:249px;height:22px;background:#fff;border:1px solid #cdcdcd;box-sizing:border-box;border-radius:0 3px 0 0;"></div>
<div class="a" style="left:601px;top:45.5px;width:207px;height:22px;background:#f5f5f5;"></div>
<div class="a" style="left:601px;top:45.5px;width:207px;height:1px;background:#d6d6d6;"></div>
<div class="a" style="left:807px;top:45.5px;width:1px;height:22px;background:#d6d6d6;"></div>
<div class="a" style="left:808px;top:66.5px;width:472px;height:1px;background:#dddddd;"></div>
<svg class="a" style="left:357px;top:52px;" width="12" height="10.5" viewBox="0 0 12 10.5"><rect x="0" y="0" width="12" height="10.5" rx="1.5" fill="#3f8fd8"/><rect x="1.5" y="3.4" width="3.9" height="2.2" fill="#cfe5f7"/><rect x="6.6" y="3.4" width="3.9" height="2.2" fill="#cfe5f7"/><rect x="1.5" y="6.8" width="3.9" height="2.2" fill="#fff"/><rect x="6.6" y="6.8" width="3.9" height="2.2" fill="#fff"/></svg>
<div class="t" style="left:373.00px;top:47.00px;font-size:11.56px;color:#1e1e1e;">es_aemps_nomenclator_medicamentos</div>
<svg class="a" style="left:605.5px;top:52px;" width="12" height="10.5" viewBox="0 0 12 10.5"><rect x="0" y="0" width="12" height="10.5" rx="1.5" fill="#3f8fd8"/><rect x="1.5" y="3.4" width="3.9" height="2.2" fill="#cfe5f7"/><rect x="6.6" y="3.4" width="3.9" height="2.2" fill="#cfe5f7"/><rect x="1.5" y="6.8" width="3.9" height="2.2" fill="#fff"/><rect x="6.6" y="6.8" width="3.9" height="2.2" fill="#fff"/></svg>
<div class="t" style="left:621.00px;top:47.00px;font-size:11.49px;color:#1e1e1e;">eu_ema_summaries_of_opinion</div>
<svg class="a" style="left:791.5px;top:53px;" width="9" height="9" viewBox="0 0 9 9"><path d="M1 1L8 8M8 1L1 8" stroke="#333" stroke-width="1.2"/></svg>
<svg class="a" style="left:1245px;top:52px;" width="8.5" height="3.8" viewBox="0 0 8.5 3.8"><rect x="0.6" y="0.6" width="7.3" height="2.6" rx="1" fill="none" stroke="#2a2a2a" stroke-width="1.2"/></svg>
<svg class="a" style="left:1263.7px;top:52px;" width="8.8" height="8.6" viewBox="0 0 8.8 8.6"><rect x="0.6" y="0.6" width="7.6" height="7.4" rx="0.8" fill="none" stroke="#2a2a2a" stroke-width="1.2"/><path d="M0.6 2.2h7.6" stroke="#2a2a2a" stroke-width="1.1"/></svg>
<div class="a" style="left:352.5px;top:87px;width:927px;height:1px;background:#d3d3d3;"></div>
<div class="a" style="left:431px;top:67.5px;width:48px;height:20px;background:#e8e8e8;border:1px solid #c9c9c9;border-top:1.5px solid #a9c9e6;border-bottom:none;box-sizing:border-box;border-radius:3px 3px 0 0;"></div>
<div class="a" style="left:563px;top:67.5px;width:1px;height:20px;background:#d3d3d3;"></div>
<svg class="a" style="left:357px;top:72.5px;" width="12" height="10.5" viewBox="0 0 12 10.5"><rect x="0" y="0" width="12" height="10.5" rx="1.5" fill="#3f8fd8"/><rect x="1.5" y="3.4" width="3.9" height="2.2" fill="#cfe5f7"/><rect x="6.6" y="3.4" width="3.9" height="2.2" fill="#cfe5f7"/><rect x="1.5" y="6.8" width="3.9" height="2.2" fill="#fff"/><rect x="6.6" y="6.8" width="3.9" height="2.2" fill="#fff"/></svg>
<div class="t" style="left:373.00px;top:67.50px;font-size:11.63px;color:#1e1e1e;">Properties</div>
<svg class="a" style="left:434.5px;top:72px;" width="14" height="12.5" viewBox="0 0 14 12.5"><rect x="0" y="0" width="11.5" height="10.6" rx="1.5" fill="#3d8fd6"/><rect x="1.5" y="3.2" width="2.3" height="2.3" fill="#bfe0fa"/><rect x="1.5" y="6.6" width="2.3" height="2.3" fill="#bfe0fa"/><rect x="5" y="3.2" width="5" height="5.6" fill="#e9f4fd"/><rect x="5.2" y="8.2" width="8" height="4" fill="#e6e6e6"/><path d="M7.2 8.8L5.8 10.3l1.4 1.5M10.8 8.8l1.4 1.5-1.4 1.5" stroke="#3d8fd6" stroke-width="1" fill="none"/></svg>
<div class="t" style="left:452.00px;top:67.50px;font-size:10.89px;color:#1e1e1e;">Data</div>
<svg class="a" style="left:482px;top:71.5px;" width="14" height="13" viewBox="0 0 14 13"><rect x="5.3" y="0.5" width="3.4" height="3.4" fill="#bfe0fa" stroke="#6aa9de" stroke-width="1"/><path d="M7 3.9v3M2.5 9V6.9h9V9M7 6.9V9" fill="none" stroke="#6aa9de" stroke-width="1"/><circle cx="2.5" cy="10.6" r="1.9" fill="#e9f4fd" stroke="#6aa9de" stroke-width="1"/><circle cx="7" cy="10.6" r="1.9" fill="#e9f4fd" stroke="#6aa9de" stroke-width="1"/><circle cx="11.5" cy="10.6" r="1.9" fill="#e9f4fd" stroke="#6aa9de" stroke-width="1"/></svg>
<div class="t" style="left:499.00px;top:67.50px;font-size:11.11px;color:#1e1e1e;">ER Diagram</div>
<svg class="a" style="left:729.8px;top:71.0px;" width="13" height="14" viewBox="0 0 13 14"><path d="M2 1.5C0 2 0 6 1.5 9C2.5 11 3.5 10 4 8.5C4.5 11 5 13 6.5 13C8 13 8 10 8 8.5C9.5 9 11 8 12 5.5C12.5 3 11.5 1 9.5 1C8 1 7 1.5 6.5 2C5.5 1 3.5 1 2 1.5Z" fill="#336791"/><path d="M4 4.5c1 0 2 .5 2 2M8.5 3.5c.5 1.5.5 3 0 4" stroke="#fff" stroke-width="0.9" fill="none"/></svg>
<svg class="a" style="left:735.3px;top:77.0px;" width="7" height="7" viewBox="0 0 7 7"><rect width="7" height="7" rx="1" fill="#3aa655"/><path d="M1.5 3.5l1.5 1.5 2.5-3" stroke="#fff" stroke-width="1" fill="none"/></svg>
<div class="t" style="left:743.60px;top:68.00px;font-size:9.74px;color:#1e1e1e;">PODR - Azure</div>
<svg class="a" style="left:813.6px;top:71.8px;" width="12.4" height="11" viewBox="0 0 12.4 11"><path d="M0 1.2Q0 0 1.2 0H4.2L5.4 1.4H11.2Q12.4 1.4 12.4 2.6V9.8Q12.4 11 11.2 11H1.2Q0 11 0 9.8Z" fill="#f0952c"/><ellipse cx="5.2" cy="4.3" rx="2.8" ry="1.1" fill="#fde6c8"/><path d="M2.4 5.6c0 .6 1.3 1.1 2.8 1.1s2.8-.5 2.8-1.1M2.4 7.4c0 .6 1.3 1.1 2.8 1.1s2.8-.5 2.8-1.1" fill="none" stroke="#fde6c8" stroke-width="1"/></svg>
<div class="t" style="left:828.70px;top:68.00px;font-size:9.75px;color:#1e1e1e;">Databases</div>
<svg class="a" style="left:880.5px;top:76.5px;" width="4.5" height="3.5" viewBox="0 0 4.5 3.5"><path d="M0 0H4.5L2.25 3.5Z" fill="#1a1a1a"/></svg>
<svg class="a" style="left:890.5px;top:72px;" width="11" height="13" viewBox="0 0 11 13"><g fill="#2e7fc4"><ellipse cx="5.5" cy="2.2" rx="5" ry="2"/><path d="M0.5 3.8c0 1.1 2.2 2 5 2s5-.9 5-2v1.9c0 1.1-2.2 2-5 2s-5-.9-5-2z"/><path d="M0.5 7.5c0 1.1 2.2 2 5 2s5-.9 5-2v2.3c0 1.1-2.2 2-5 2s-5-.9-5-2z"/></g></svg>
<div class="t" style="left:905.50px;top:68.00px;font-size:10.01px;color:#1e1e1e;">nihpo</div>
<svg class="a" style="left:938.5px;top:71.8px;" width="12.4" height="11" viewBox="0 0 12.4 11"><path d="M0 1.2Q0 0 1.2 0H4.2L5.4 1.4H11.2Q12.4 1.4 12.4 2.6V9.8Q12.4 11 11.2 11H1.2Q0 11 0 9.8Z" fill="#f0952c"/><path d="M2 4.2h8.4M2 6.6h8.4M2 9h8.4M4.8 4.2v4.8M7.6 4.2v4.8" stroke="#fde6c8" stroke-width="1.1"/></svg>
<div class="t" style="left:953.60px;top:68.00px;font-size:9.60px;color:#1e1e1e;">Schemas</div>
<svg class="a" style="left:998.5px;top:76.5px;" width="4.5" height="3.5" viewBox="0 0 4.5 3.5"><path d="M0 0H4.5L2.25 3.5Z" fill="#1a1a1a"/></svg>
<svg class="a" style="left:1009px;top:71.5px;" width="11" height="14" viewBox="0 0 11 14"><path d="M0.6 0.6h6.5l3.3 3.3v9.5H0.6z" fill="#fff" stroke="#2e7fc4" stroke-width="1.1"/><path d="M3 5h1M3 7.5h1M3 10h1M5 5h3M5 7.5h3M5 10h3" stroke="#2e7fc4" stroke-width="1"/></svg>
<div class="t" style="left:1023.50px;top:68.00px;font-size:10.14px;color:#1e1e1e;">public</div>
<svg class="a" style="left:1058px;top:71.8px;" width="12.4" height="11" viewBox="0 0 12.4 11"><path d="M0 1.2Q0 0 1.2 0H4.2L5.4 1.4H11.2Q12.4 1.4 12.4 2.6V9.8Q12.4 11 11.2 11H1.2Q0 11 0 9.8Z" fill="#f0952c"/><path d="M1.8 4.2h1.6M1.8 6.4h1.6M1.8 8.6h1.6M4.6 4.2h6M4.6 6.4h6M4.6 8.6h6" stroke="#fde6c8" stroke-width="1.1"/></svg>
<div class="t" style="left:1073.40px;top:68.00px;font-size:9.69px;color:#1e1e1e;">Tables</div>
<svg class="a" style="left:1106.5px;top:76.5px;" width="4.5" height="3.5" viewBox="0 0 4.5 3.5"><path d="M0 0H4.5L2.25 3.5Z" fill="#1a1a1a"/></svg>
<svg class="a" style="left:1117px;top:73px;" width="12" height="10.5" viewBox="0 0 12 10.5"><rect x="0" y="0" width="12" height="10.5" rx="1.5" fill="#3f8fd8"/><rect x="1.5" y="3.4" width="3.9" height="2.2" fill="#cfe5f7"/><rect x="6.6" y="3.4" width="3.9" height="2.2" fill="#cfe5f7"/><rect x="1.5" y="6.8" width="3.9" height="2.2" fill="#fff"/><rect x="6.6" y="6.8" width="3.9" height="2.2" fill="#fff"/></svg>
<div class="t" style="left:1131.60px;top:68.00px;font-size:9.87px;color:#1e1e1e;">eu_ema_summaries_of_opinion</div>
<div class="a" style="left:352.5px;top:88px;width:927px;height:24px;background:#f8f8f8;"></div>
<div class="a" style="left:355px;top:91px;width:796.5px;height:18.5px;background:#fdfdfd;border:1px solid #ebebeb;box-sizing:border-box;"></div>
<svg class="a" style="left:358.5px;top:95px;" width="12" height="10.5" viewBox="0 0 12 10.5"><rect x="0" y="0" width="12" height="10.5" rx="1.5" fill="#3f8fd8"/><rect x="1.5" y="3.4" width="3.9" height="2.2" fill="#cfe5f7"/><rect x="6.6" y="3.4" width="3.9" height="2.2" fill="#cfe5f7"/><rect x="1.5" y="6.8" width="3.9" height="2.2" fill="#fff"/><rect x="6.6" y="6.8" width="3.9" height="2.2" fill="#fff"/></svg>
<div class="t" style="left:373.00px;top:90.00px;font-size:11.45px;color:#178a17;">eu_ema_summaries_of_opinion</div>
<div class="a" style="left:542px;top:92px;width:1px;height:16px;background:#cfcfcf;"></div>
<svg class="a" style="left:546px;top:94px;" width="13" height="13" viewBox="0 0 13 13"><path d="M0.5 4V0.5H4M9 0.5h3.5V4M12.5 9v3.5H9M4 12.5H0.5V9" fill="none" stroke="#777" stroke-width="1.1"/><path d="M1 1l3 3M12 1L9 4M12 12L9 9M1 12l3-3" stroke="#777" stroke-width="1.1"/></svg>
<div class="t" style="left:564.80px;top:90.00px;font-size:11.63px;color:#a8a8a8;font-style:italic;">Enter a SQL expression to filter results (use Ctrl+Space)</div>
<svg class="a" style="left:1119px;top:96.5px;" width="6" height="8" viewBox="0 0 6 8"><path d="M0 0L6 4L0 8Z" fill="#7a7a7a"/></svg>
<div class="a" style="left:1134px;top:93px;width:1.2px;height:14px;background:#9a9a9a;"></div>
<svg class="a" style="left:1138px;top:98.5px;" width="9" height="4" viewBox="0 0 9 4"><path d="M0 0H9L4.5 4Z" fill="#6a6a6a"/></svg>
<svg class="a" style="left:1159px;top:94px;" width="13" height="13" viewBox="0 0 13 13"><path d="M7 1l5 5-5 5.5H3L1 9.5z" fill="#d8e8f6" stroke="#9cc3e6" stroke-width="1"/><path d="M9 12.5h3" stroke="#bbb" stroke-width="0.8"/></svg>
<svg class="a" style="left:1178px;top:93.5px;" width="14" height="14" viewBox="0 0 14 14"><path d="M0.5 0.5h11L7.5 5.5v7L4.5 11V5.5z" fill="#3d8fd6"/><rect x="8" y="8" width="5" height="5" rx="1" fill="#fff" stroke="#43a047" stroke-width="1.2"/></svg>
<svg class="a" style="left:1197.5px;top:93.5px;" width="11" height="14" viewBox="0 0 11 14"><path d="M0.5 0.5h10L6.8 5.5v8L4.2 11.5V5.5z" fill="#3d8fd6"/></svg>
<svg class="a" style="left:1214px;top:94px;" width="2" height="14" viewBox="0 0 2 14"><circle cx="1" cy="0.8" r="0.7" fill="#9a9a9a"/><circle cx="1" cy="4.4" r="0.7" fill="#9a9a9a"/><circle cx="1" cy="8.0" r="0.7" fill="#9a9a9a"/><circle cx="1" cy="11.6" r="0.7" fill="#9a9a9a"/></svg>
<svg class="a" style="left:1221px;top:95.5px;" width="13" height="10" viewBox="0 0 13 10"><path d="M0 5L5 0.5V3h8v4H5v2.5z" fill="#a9d8a2"/></svg>
<svg class="a" style="left:1237.5px;top:99px;" width="3.5" height="3" viewBox="0 0 3.5 3"><path d="M0 0H3.5L1.75 3Z" fill="#b9b9b9"/></svg>
<svg class="a" style="left:1246px;top:95.5px;" width="13" height="10" viewBox="0 0 13 10"><path d="M13 5L8 0.5V3H0v4h8v2.5z" fill="#a9d8a2"/></svg>
<svg class="a" style="left:1262.5px;top:99px;" width="3.5" height="3" viewBox="0 0 3.5 3"><path d="M0 0H3.5L1.75 3Z" fill="#c8b8d8"/></svg>
<div class="a" style="left:352.5px;top:111.5px;width:907px;height:1px;background:#e4e4e4;"></div>
<div class="a" style="left:354.2px;top:112.5px;width:17px;height:54px;background:#ececec;border:1px solid #b9b9b9;box-sizing:border-box;border-radius:1px;"></div>
<div class="t" style="left:343px;top:128px;width:40px;line-height:12px;height:12px;text-align:center;font-size:11.2px;color:#1e1e1e;transform:rotate(-90deg);transform-origin:50% 50%;">Grid</div>
<svg class="a" style="left:356.5px;top:146.5px;" width="12.5" height="12.5" viewBox="0 0 12.5 12.5"><rect width="12.5" height="12.5" rx="2" fill="#4d9be0"/><g fill="#fff"><rect x="2" y="2" width="2.2" height="2.2"/><rect x="5.2" y="2" width="2.2" height="2.2"/><rect x="8.4" y="2" width="2.2" height="2.2"/><rect x="2" y="5.2" width="2.2" height="2.2"/><rect x="5.2" y="5.2" width="2.2" height="2.2"/><rect x="8.4" y="5.2" width="2.2" height="2.2"/><rect x="2" y="8.4" width="2.2" height="2.2"/><rect x="5.2" y="8.4" width="2.2" height="2.2"/><rect x="8.4" y="8.4" width="2.2" height="2.2"/></g></svg>
<div class="t" style="left:343px;top:181.5px;width:40px;line-height:12px;height:12px;text-align:center;font-size:11.2px;color:#1e1e1e;transform:rotate(-90deg);transform-origin:50% 50%;">Text</div>
<svg class="a" style="left:358px;top:201px;" width="9" height="13" viewBox="0 0 9 13"><path d="M1 1h7M4.5 1v7" stroke="#4d9be0" stroke-width="1.4"/><path d="M3 9.5l-2 1.7 2 1.7M6 9.5l2 1.7-2 1.7" stroke="#4d9be0" stroke-width="0.9" fill="none"/></svg>
<div class="t" style="left:343px;top:599px;width:40px;line-height:12px;height:12px;text-align:center;font-size:11.2px;color:#1e1e1e;transform:rotate(-90deg);transform-origin:50% 50%;">Record</div>
<div class="a" style="left:373px;top:112.5px;width:887px;height:512.5px;overflow:hidden;background:#fff;">
<div class="a" style="left:0px;top:0px;width:887px;height:22.80000000000001px;background:#ececec;"></div>
<div class="a" style="left:0px;top:22.50000000000001px;width:887px;height:1.4px;background:#2e2e2e;"></div>
<div class="a" style="left:24.7px;top:0px;width:1.4px;height:22.80000000000001px;background:#2e2e2e;"></div>
<div class="a" style="left:26.1px;top:0px;width:5px;height:22.80000000000001px;background:#dfe8f3;"></div>
<div class="a" style="left:30.5px;top:0px;width:1.4px;height:23.30000000000001px;background:#2e2e2e;"></div>
<div class="a" style="left:131.5px;top:0px;width:1.4px;height:23.30000000000001px;background:#2e2e2e;"></div>
<div class="a" style="left:371.5px;top:0px;width:1.4px;height:23.30000000000001px;background:#2e2e2e;"></div>
<div class="a" style="left:636.5px;top:0px;width:1.4px;height:23.30000000000001px;background:#2e2e2e;"></div>
<svg class="a" style="left:36.5px;top:7.999999999999997px" width="14" height="7" viewBox="0 0 14 7"><text x="0" y="6.1" font-size="8" font-weight="bold" fill="#4a90d9" stroke="#4a90d9" stroke-width="0.35" textLength="13.6" lengthAdjust="spacingAndGlyphs" font-family="Liberation Sans">ABC</text></svg>
<div class="t" style="left:53.00px;top:1.30px;font-size:11.68px;color:#1e1e1e;white-space:nowrap;">category</div>
<svg class="a" style="left:137.5px;top:7.999999999999997px" width="14" height="7" viewBox="0 0 14 7"><text x="0" y="6.1" font-size="8" font-weight="bold" fill="#4a90d9" stroke="#4a90d9" stroke-width="0.35" textLength="13.6" lengthAdjust="spacingAndGlyphs" font-family="Liberation Sans">ABC</text></svg>
<div class="t" style="left:154.00px;top:1.30px;font-size:11.68px;color:#1e1e1e;white-space:nowrap;">medicine_name</div>
<svg class="a" style="left:377.5px;top:7.999999999999997px" width="14" height="7" viewBox="0 0 14 7"><text x="0" y="6.1" font-size="8" font-weight="bold" fill="#4a90d9" stroke="#4a90d9" stroke-width="0.35" textLength="13.6" lengthAdjust="spacingAndGlyphs" font-family="Liberation Sans">ABC</text></svg>
<div class="t" style="left:394.00px;top:1.30px;font-size:11.68px;color:#1e1e1e;white-space:nowrap;">therapeutic_area</div>
<svg class="a" style="left:642.5px;top:7.999999999999997px" width="14" height="7" viewBox="0 0 14 7"><text x="0" y="6.1" font-size="8" font-weight="bold" fill="#4a90d9" stroke="#4a90d9" stroke-width="0.35" textLength="13.6" lengthAdjust="spacingAndGlyphs" font-family="Liberation Sans">ABC</text></svg>
<div class="t" style="left:659.00px;top:1.30px;font-size:11.68px;color:#1e1e1e;white-space:nowrap;">international_nonproprietary_name_inn__common_name</div>
<svg class="a" style="left:118.7px;top:8.5px;" width="9" height="5" viewBox="0 0 9 5"><path d="M0 0H9L4.5 5Z" fill="#3d8fd6"/></svg>
<svg class="a" style="left:358.7px;top:8.5px;" width="9" height="5" viewBox="0 0 9 5"><path d="M0 0H9L4.5 5Z" fill="#3d8fd6"/></svg>
<svg class="a" style="left:623.7px;top:8.5px;" width="9" height="5" viewBox="0 0 9 5"><path d="M0 0H9L4.5 5Z" fill="#3d8fd6"/></svg>
<div class="a" style="left:879px;top:0.5px;width:8px;height:21.30000000000001px;background:#ececec;"></div>
<div class="a" style="left:26px;top:23.700000000000017px;width:860.5px;height:17.1px;background:#dde5f0;"></div>
<div class="a" style="left:30.5px;top:23.700000000000017px;width:1px;height:17.1px;background:rgba(255,255,255,0.6);"></div>
<div class="a" style="left:0px;top:23.700000000000017px;width:24.7px;height:17.1px;background:#ebebeb;"></div>
<div class="t" style="left:4.00px;top:23.05px;font-size:11.68px;color:#111;">23</div>
<div class="a" style="left:31.5px;top:23.700000000000017px;width:100px;height:17.1px;overflow:hidden;">
<div class="t" style="left:4.50px;top:-0.65px;font-size:11.68px;color:#111;white-space:nowrap;">Human</div>
</div>
<div class="a" style="left:132.5px;top:23.700000000000017px;width:239px;height:17.1px;overflow:hidden;">
<div class="t" style="left:4.50px;top:-0.65px;font-size:11.68px;color:#111;white-space:nowrap;">Voraxaze,</div>
</div>
<div class="a" style="left:372.5px;top:23.700000000000017px;width:264px;height:17.1px;overflow:hidden;">
<div class="t" style="left:4.50px;top:-0.65px;font-size:11.68px;color:#111;white-space:nowrap;">Metabolic Side Effects of Drugs and Substances</div>
</div>
<div class="a" style="left:637.5px;top:23.700000000000017px;width:248.5px;height:17.1px;overflow:hidden;">
<div class="t" style="left:4.50px;top:-0.65px;font-size:11.68px;color:#111;white-space:nowrap;">glucarpidase</div>
</div>
<div class="a" style="left:131.5px;top:23.700000000000017px;width:1px;height:17.1px;background:rgba(255,255,255,0.8);"></div>
<div class="a" style="left:371.5px;top:23.700000000000017px;width:1px;height:17.1px;background:rgba(255,255,255,0.8);"></div>
<div class="a" style="left:636.5px;top:23.700000000000017px;width:1px;height:17.1px;background:rgba(255,255,255,0.8);"></div>
<div class="a" style="left:26px;top:40.80000000000001px;width:860.5px;height:17.1px;background:#ffffff;"></div>
<div class="a" style="left:30.5px;top:40.80000000000001px;width:1px;height:17.1px;background:rgba(255,255,255,0.6);"></div>
<div class="a" style="left:0px;top:40.80000000000001px;width:24.7px;height:17.1px;background:#ebebeb;"></div>
<div class="t" style="left:4.00px;top:40.15px;font-size:11.68px;color:#111;">24</div>
<div class="a" style="left:31.5px;top:40.80000000000001px;width:100px;height:17.1px;overflow:hidden;">
<div class="t" style="left:4.50px;top:-0.65px;font-size:11.68px;color:#111;white-space:nowrap;">Human</div>
</div>
<div class="a" style="left:132.5px;top:40.80000000000001px;width:239px;height:17.1px;overflow:hidden;">
<div class="t" style="left:4.50px;top:-0.65px;font-size:11.68px;color:#111;white-space:nowrap;">Tecovirimat SIGA,</div>
</div>
<div class="a" style="left:372.5px;top:40.80000000000001px;width:264px;height:17.1px;overflow:hidden;">
<div class="t" style="left:4.50px;top:-0.65px;font-size:11.68px;color:#111;white-space:nowrap;">Poxviridae Infections; Cowpox; Monkeypox; Vaccinia; Smallpox</div>
</div>
<div class="a" style="left:637.5px;top:40.80000000000001px;width:248.5px;height:17.1px;overflow:hidden;">
<div class="t" style="left:4.50px;top:-0.65px;font-size:11.68px;color:#111;white-space:nowrap;">tecovirimat</div>
</div>
<div class="a" style="left:131.5px;top:40.80000000000001px;width:1px;height:17.1px;background:rgba(255,255,255,0.8);"></div>
<div class="a" style="left:371.5px;top:40.80000000000001px;width:1px;height:17.1px;background:rgba(255,255,255,0.8);"></div>
<div class="a" style="left:636.5px;top:40.80000000000001px;width:1px;height:17.1px;background:rgba(255,255,255,0.8);"></div>
<div class="a" style="left:26px;top:57.900000000000034px;width:860.5px;height:17.1px;background:#dde5f0;"></div>
<div class="a" style="left:30.5px;top:57.900000000000034px;width:1px;height:17.1px;background:rgba(255,255,255,0.6);"></div>
<div class="a" style="left:0px;top:57.900000000000034px;width:24.7px;height:17.1px;background:#ebebeb;"></div>
<div class="t" style="left:4.00px;top:57.25px;font-size:11.68px;color:#111;">25</div>
<div class="a" style="left:31.5px;top:57.900000000000034px;width:100px;height:17.1px;overflow:hidden;">
<div class="t" style="left:4.50px;top:-0.65px;font-size:11.68px;color:#111;white-space:nowrap;">Human</div>
</div>
<div class="a" style="left:132.5px;top:57.900000000000034px;width:239px;height:17.1px;overflow:hidden;">
<div class="t" style="left:4.50px;top:-0.65px;font-size:11.68px;color:#111;white-space:nowrap;">Lonapegsomatropin Ascendis Pharma ,</div>
</div>
<div class="a" style="left:372.5px;top:57.900000000000034px;width:264px;height:17.1px;overflow:hidden;">
<div class="t" style="left:4.50px;top:-0.65px;font-size:11.68px;color:#111;white-space:nowrap;">Growth and Development</div>
</div>
<div class="a" style="left:637.5px;top:57.900000000000034px;width:248.5px;height:17.1px;overflow:hidden;">
<div class="t" style="left:4.50px;top:-0.65px;font-size:11.68px;color:#111;white-space:nowrap;">lonapegsomatropin</div>
</div>
<div class="a" style="left:131.5px;top:57.900000000000034px;width:1px;height:17.1px;background:rgba(255,255,255,0.8);"></div>
<div class="a" style="left:371.5px;top:57.900000000000034px;width:1px;height:17.1px;background:rgba(255,255,255,0.8);"></div>
<div class="a" style="left:636.5px;top:57.900000000000034px;width:1px;height:17.1px;background:rgba(255,255,255,0.8);"></div>
<div class="a" style="left:26px;top:75.00000000000003px;width:860.5px;height:17.1px;background:#ffffff;"></div>
<div class="a" style="left:30.5px;top:75.00000000000003px;width:1px;height:17.1px;background:rgba(255,255,255,0.6);"></div>
<div class="a" style="left:0px;top:75.00000000000003px;width:24.7px;height:17.1px;background:#ebebeb;"></div>
<div class="t" style="left:4.00px;top:74.35px;font-size:11.68px;color:#111;">26</div>
<div class="a" style="left:31.5px;top:75.00000000000003px;width:100px;height:17.1px;overflow:hidden;">
<div class="t" style="left:4.50px;top:-0.65px;font-size:11.68px;color:#111;white-space:nowrap;">Human</div>
</div>
<div class="a" style="left:132.5px;top:75.00000000000003px;width:239px;height:17.1px;overflow:hidden;">
<div class="t" style="left:4.50px;top:-0.65px;font-size:11.68px;color:#111;white-space:nowrap;">Rapiscan,</div>
</div>
<div class="a" style="left:372.5px;top:75.00000000000003px;width:264px;height:17.1px;overflow:hidden;">
<div class="t" style="left:4.50px;top:-0.65px;font-size:11.68px;color:#111;white-space:nowrap;">Myocardial Perfusion Imaging</div>
</div>
<div class="a" style="left:637.5px;top:75.00000000000003px;width:248.5px;height:17.1px;overflow:hidden;">
<div class="t" style="left:4.50px;top:-0.65px;font-size:11.68px;color:#111;white-space:nowrap;">regadenoson</div>
</div>
<div class="a" style="left:131.5px;top:75.00000000000003px;width:1px;height:17.1px;background:rgba(255,255,255,0.8);"></div>
<div class="a" style="left:371.5px;top:75.00000000000003px;width:1px;height:17.1px;background:rgba(255,255,255,0.8);"></div>
<div class="a" style="left:636.5px;top:75.00000000000003px;width:1px;height:17.1px;background:rgba(255,255,255,0.8);"></div>
<div class="a" style="left:26px;top:92.10000000000002px;width:860.5px;height:17.1px;background:#dde5f0;"></div>
<div class="a" style="left:30.5px;top:92.10000000000002px;width:1px;height:17.1px;background:rgba(255,255,255,0.6);"></div>
<div class="a" style="left:0px;top:92.10000000000002px;width:24.7px;height:17.1px;background:#ebebeb;"></div>
<div class="t" style="left:4.00px;top:91.45px;font-size:11.68px;color:#111;">27</div>
<div class="a" style="left:31.5px;top:92.10000000000002px;width:100px;height:17.1px;overflow:hidden;">
<div class="t" style="left:4.50px;top:-0.65px;font-size:11.68px;color:#111;white-space:nowrap;">Human</div>
</div>
<div class="a" style="left:132.5px;top:92.10000000000002px;width:239px;height:17.1px;overflow:hidden;">
<div class="t" style="left:4.50px;top:-0.65px;font-size:11.68px;color:#111;white-space:nowrap;">Wegovy ,</div>
</div>
<div class="a" style="left:372.5px;top:92.10000000000002px;width:264px;height:17.1px;overflow:hidden;">
<div class="t" style="left:4.50px;top:-0.65px;font-size:11.68px;color:#111;white-space:nowrap;">Obesity; Overweight</div>
</div>
<div class="a" style="left:637.5px;top:92.10000000000002px;width:248.5px;height:17.1px;overflow:hidden;">
<div class="t" style="left:4.50px;top:-0.65px;font-size:11.68px;color:#111;white-space:nowrap;">semaglutide</div>
</div>
<div class="a" style="left:131.5px;top:92.10000000000002px;width:1px;height:17.1px;background:rgba(255,255,255,0.8);"></div>
<div class="a" style="left:371.5px;top:92.10000000000002px;width:1px;height:17.1px;background:rgba(255,255,255,0.8);"></div>
<div class="a" style="left:636.5px;top:92.10000000000002px;width:1px;height:17.1px;background:rgba(255,255,255,0.8);"></div>
<div class="a" style="left:26px;top:109.20000000000002px;width:860.5px;height:17.1px;background:#ffffff;"></div>
<div class="a" style="left:30.5px;top:109.20000000000002px;width:1px;height:17.1px;background:rgba(255,255,255,0.6);"></div>
<div class="a" style="left:0px;top:109.20000000000002px;width:24.7px;height:17.1px;background:#ebebeb;"></div>
<div class="t" style="left:4.00px;top:108.55px;font-size:11.68px;color:#111;">28</div>
<div class="a" style="left:31.5px;top:109.20000000000002px;width:100px;height:17.1px;overflow:hidden;">
<div class="t" style="left:4.50px;top:-0.65px;font-size:11.68px;color:#111;white-space:nowrap;">Human</div>
</div>
<div class="a" style="left:132.5px;top:109.20000000000002px;width:239px;height:17.1px;overflow:hidden;">
<div class="t" style="left:4.50px;top:-0.65px;font-size:11.68px;color:#111;white-space:nowrap;">Riltrava Aerosphere,</div>
</div>
<div class="a" style="left:372.5px;top:109.20000000000002px;width:264px;height:17.1px;overflow:hidden;">
<div class="t" style="left:4.50px;top:-0.65px;font-size:11.68px;color:#111;white-space:nowrap;">Pulmonary Disease, Chronic Obstructive</div>
</div>
<div class="a" style="left:637.5px;top:109.20000000000002px;width:248.5px;height:17.1px;overflow:hidden;">
<div class="t" style="left:4.50px;top:-0.65px;font-size:11.68px;color:#111;white-space:nowrap;">formoterol fumarate dihydrate, glycopyrronium, budesonide</div>
</div>
<div class="a" style="left:131.5px;top:109.20000000000002px;width:1px;height:17.1px;background:rgba(255,255,255,0.8);"></div>
<div class="a" style="left:371.5px;top:109.20000000000002px;width:1px;height:17.1px;background:rgba(255,255,255,0.8);"></div>
<div class="a" style="left:636.5px;top:109.20000000000002px;width:1px;height:17.1px;background:rgba(255,255,255,0.8);"></div>
<div class="a" style="left:26px;top:126.30000000000001px;width:860.5px;height:17.1px;background:#dde5f0;"></div>
<div class="a" style="left:30.5px;top:126.30000000000001px;width:1px;height:17.1px;background:rgba(255,255,255,0.6);"></div>
<div class="a" style="left:0px;top:126.30000000000001px;width:24.7px;height:17.1px;background:#ebebeb;"></div>
<div class="t" style="left:4.00px;top:125.65px;font-size:11.68px;color:#111;">29</div>
<div class="a" style="left:31.5px;top:126.30000000000001px;width:100px;height:17.1px;overflow:hidden;">
<div class="t" style="left:4.50px;top:-0.65px;font-size:11.68px;color:#111;white-space:nowrap;">Human</div>
</div>
<div class="a" style="left:132.5px;top:126.30000000000001px;width:239px;height:17.1px;overflow:hidden;">
<div class="t" style="left:4.50px;top:-0.65px;font-size:11.68px;color:#111;white-space:nowrap;">Vyepti,</div>
</div>
<div class="a" style="left:372.5px;top:126.30000000000001px;width:264px;height:17.1px;overflow:hidden;">
<div class="t" style="left:4.50px;top:-0.65px;font-size:11.68px;color:#111;white-space:nowrap;">Migraine Disorders</div>
</div>
<div class="a" style="left:637.5px;top:126.30000000000001px;width:248.5px;height:17.1px;overflow:hidden;">
<div class="t" style="left:4.50px;top:-0.65px;font-size:11.68px;color:#111;white-space:nowrap;">eptinezumab</div>
</div>
<div class="a" style="left:131.5px;top:126.30000000000001px;width:1px;height:17.1px;background:rgba(255,255,255,0.8);"></div>
<div class="a" style="left:371.5px;top:126.30000000000001px;width:1px;height:17.1px;background:rgba(255,255,255,0.8);"></div>
<div class="a" style="left:636.5px;top:126.30000000000001px;width:1px;height:17.1px;background:rgba(255,255,255,0.8);"></div>
<div class="a" style="left:26px;top:143.40000000000003px;width:860.5px;height:17.1px;background:#ffffff;"></div>
<div class="a" style="left:30.5px;top:143.40000000000003px;width:1px;height:17.1px;background:rgba(255,255,255,0.6);"></div>
<div class="a" style="left:0px;top:143.40000000000003px;width:24.7px;height:17.1px;background:#ebebeb;"></div>
<div class="t" style="left:4.00px;top:142.75px;font-size:11.68px;color:#111;">30</div>
<div class="a" style="left:31.5px;top:143.40000000000003px;width:100px;height:17.1px;overflow:hidden;">
<div class="t" style="left:4.50px;top:-0.65px;font-size:11.68px;color:#111;white-space:nowrap;">Human</div>
</div>
<div class="a" style="left:132.5px;top:143.40000000000003px;width:239px;height:17.1px;overflow:hidden;">
<div class="t" style="left:4.50px;top:-0.65px;font-size:11.68px;color:#111;white-space:nowrap;">Kalydeco,</div>
</div>
<div class="a" style="left:372.5px;top:143.40000000000003px;width:264px;height:17.1px;overflow:hidden;">
<div class="t" style="left:4.50px;top:-0.65px;font-size:11.68px;color:#111;white-space:nowrap;">Cystic Fibrosis</div>
</div>
<div class="a" style="left:637.5px;top:143.40000000000003px;width:248.5px;height:17.1px;overflow:hidden;">
<div class="t" style="left:4.50px;top:-0.65px;font-size:11.68px;color:#111;white-space:nowrap;">ivacaftor</div>
</div>
<div class="a" style="left:131.5px;top:143.40000000000003px;width:1px;height:17.1px;background:rgba(255,255,255,0.8);"></div>
<div class="a" style="left:371.5px;top:143.40000000000003px;width:1px;height:17.1px;background:rgba(255,255,255,0.8);"></div>
<div class="a" style="left:636.5px;top:143.40000000000003px;width:1px;height:17.1px;background:rgba(255,255,255,0.8);"></div>
<div class="a" style="left:26px;top:160.5px;width:860.5px;height:17.1px;background:#dde5f0;"></div>
<div class="a" style="left:30.5px;top:160.5px;width:1px;height:17.1px;background:rgba(255,255,255,0.6);"></div>
<div class="a" style="left:0px;top:160.5px;width:24.7px;height:17.1px;background:#ebebeb;"></div>
<div class="t" style="left:4.00px;top:159.85px;font-size:11.68px;color:#111;">31</div>
<div class="a" style="left:31.5px;top:160.5px;width:100px;height:17.1px;overflow:hidden;">
<div class="t" style="left:4.50px;top:-0.65px;font-size:11.68px;color:#111;white-space:nowrap;">Human</div>
</div>
<div class="a" style="left:132.5px;top:160.5px;width:239px;height:17.1px;overflow:hidden;">
<div class="t" style="left:4.50px;top:-0.65px;font-size:11.68px;color:#111;white-space:nowrap;">Ipique,</div>
</div>
<div class="a" style="left:372.5px;top:160.5px;width:264px;height:17.1px;overflow:hidden;">
<div class="t" style="left:4.50px;top:-0.65px;font-size:11.68px;color:#111;white-space:nowrap;">Wet Macular Degeneration</div>
</div>
<div class="a" style="left:637.5px;top:160.5px;width:248.5px;height:17.1px;overflow:hidden;">
<div class="t" style="left:4.50px;top:-0.65px;font-size:11.68px;color:#111;white-space:nowrap;">bevacizumab</div>
</div>
<div class="a" style="left:131.5px;top:160.5px;width:1px;height:17.1px;background:rgba(255,255,255,0.8);"></div>
<div class="a" style="left:371.5px;top:160.5px;width:1px;height:17.1px;background:rgba(255,255,255,0.8);"></div>
<div class="a" style="left:636.5px;top:160.5px;width:1px;height:17.1px;background:rgba(255,255,255,0.8);"></div>
<div class="a" style="left:26px;top:177.60000000000002px;width:860.5px;height:17.1px;background:#ffffff;"></div>
<div class="a" style="left:30.5px;top:177.60000000000002px;width:1px;height:17.1px;background:rgba(255,255,255,0.6);"></div>
<div class="a" style="left:0px;top:177.60000000000002px;width:24.7px;height:17.1px;background:#ebebeb;"></div>
<div class="t" style="left:4.00px;top:176.95px;font-size:11.68px;color:#111;">32</div>
<div class="a" style="left:31.5px;top:177.60000000000002px;width:100px;height:17.1px;overflow:hidden;">
<div class="t" style="left:4.50px;top:-0.65px;font-size:11.68px;color:#111;white-space:nowrap;">Human</div>
</div>
<div class="a" style="left:132.5px;top:177.60000000000002px;width:239px;height:17.1px;overflow:hidden;">
<div class="t" style="left:4.50px;top:-0.65px;font-size:11.68px;color:#111;white-space:nowrap;">Kaftrio,</div>
</div>
<div class="a" style="left:372.5px;top:177.60000000000002px;width:264px;height:17.1px;overflow:hidden;">
<div class="t" style="left:4.50px;top:-0.65px;font-size:11.68px;color:#111;white-space:nowrap;">Cystic Fibrosis</div>
</div>
<div class="a" style="left:637.5px;top:177.60000000000002px;width:248.5px;height:17.1px;overflow:hidden;">
<div class="t" style="left:4.50px;top:-0.65px;font-size:11.68px;color:#111;white-space:nowrap;">ivacaftor, tezacaftor, elexacaftor</div>
</div>
<div class="a" style="left:131.5px;top:177.60000000000002px;width:1px;height:17.1px;background:rgba(255,255,255,0.8);"></div>
<div class="a" style="left:371.5px;top:177.60000000000002px;width:1px;height:17.1px;background:rgba(255,255,255,0.8);"></div>
<div class="a" style="left:636.5px;top:177.60000000000002px;width:1px;height:17.1px;background:rgba(255,255,255,0.8);"></div>
<div class="a" style="left:26px;top:194.70000000000005px;width:860.5px;height:17.1px;background:#dde5f0;"></div>
<div class="a" style="left:30.5px;top:194.70000000000005px;width:1px;height:17.1px;background:rgba(255,255,255,0.6);"></div>
<div class="a" style="left:0px;top:194.70000000000005px;width:24.7px;height:17.1px;background:#ebebeb;"></div>
<div class="t" style="left:4.00px;top:194.05px;font-size:11.68px;color:#111;">33</div>
<div class="a" style="left:31.5px;top:194.70000000000005px;width:100px;height:17.1px;overflow:hidden;">
<div class="t" style="left:4.50px;top:-0.65px;font-size:11.68px;color:#111;white-space:nowrap;">Human</div>
</div>
<div class="a" style="left:132.5px;top:194.70000000000005px;width:239px;height:17.1px;overflow:hidden;">
<div class="t" style="left:4.50px;top:-0.65px;font-size:11.68px;color:#111;white-space:nowrap;">Uplizna,</div>
</div>
<div class="a" style="left:372.5px;top:194.70000000000005px;width:264px;height:17.1px;overflow:hidden;">
<div class="t" style="left:4.50px;top:-0.65px;font-size:11.68px;color:#111;white-space:nowrap;">Neuromyelitis Optica</div>
</div>
<div class="a" style="left:637.5px;top:194.70000000000005px;width:248.5px;height:17.1px;overflow:hidden;">
<div class="t" style="left:4.50px;top:-0.65px;font-size:11.68px;color:#111;white-space:nowrap;">inebilizumab</div>
</div>
<div class="a" style="left:131.5px;top:194.70000000000005px;width:1px;height:17.1px;background:rgba(255,255,255,0.8);"></div>
<div class="a" style="left:371.5px;top:194.70000000000005px;width:1px;height:17.1px;background:rgba(255,255,255,0.8);"></div>
<div class="a" style="left:636.5px;top:194.70000000000005px;width:1px;height:17.1px;background:rgba(255,255,255,0.8);"></div>
<div class="a" style="left:26px;top:211.80000000000007px;width:860.5px;height:17.1px;background:#ffffff;"></div>
<div class="a" style="left:30.5px;top:211.80000000000007px;width:1px;height:17.1px;background:rgba(255,255,255,0.6);"></div>
<div class="a" style="left:0px;top:211.80000000000007px;width:24.7px;height:17.1px;background:#ebebeb;"></div>
<div class="t" style="left:4.00px;top:211.15px;font-size:11.68px;color:#111;">34</div>
<div class="a" style="left:31.5px;top:211.80000000000007px;width:100px;height:17.1px;overflow:hidden;">
<div class="t" style="left:4.50px;top:-0.65px;font-size:11.68px;color:#111;white-space:nowrap;">Human</div>
</div>
<div class="a" style="left:132.5px;top:211.80000000000007px;width:239px;height:17.1px;overflow:hidden;">
<div class="t" style="left:4.50px;top:-0.65px;font-size:11.68px;color:#111;white-space:nowrap;">Epclusa,</div>
</div>
<div class="a" style="left:372.5px;top:211.80000000000007px;width:264px;height:17.1px;overflow:hidden;">
<div class="t" style="left:4.50px;top:-0.65px;font-size:11.68px;color:#111;white-space:nowrap;">Hepatitis C, Chronic</div>
</div>
<div class="a" style="left:637.5px;top:211.80000000000007px;width:248.5px;height:17.1px;overflow:hidden;">
<div class="t" style="left:4.50px;top:-0.65px;font-size:11.68px;color:#111;white-space:nowrap;">sofosbuvir, velpatasvir</div>
</div>
<div class="a" style="left:131.5px;top:211.80000000000007px;width:1px;height:17.1px;background:rgba(255,255,255,0.8);"></div>
<div class="a" style="left:371.5px;top:211.80000000000007px;width:1px;height:17.1px;background:rgba(255,255,255,0.8);"></div>
<div class="a" style="left:636.5px;top:211.80000000000007px;width:1px;height:17.1px;background:rgba(255,255,255,0.8);"></div>
<div class="a" style="left:26px;top:228.90000000000003px;width:860.5px;height:17.1px;background:#dde5f0;"></div>
<div class="a" style="left:30.5px;top:228.90000000000003px;width:1px;height:17.1px;background:rgba(255,255,255,0.6);"></div>
<div class="a" style="left:0px;top:228.90000000000003px;width:24.7px;height:17.1px;background:#ebebeb;"></div>
<div class="t" style="left:4.00px;top:228.25px;font-size:11.68px;color:#111;">35</div>
<div class="a" style="left:31.5px;top:228.90000000000003px;width:100px;height:17.1px;overflow:hidden;">
<div class="t" style="left:4.50px;top:-0.65px;font-size:11.68px;color:#111;white-space:nowrap;">Human</div>
</div>
<div class="a" style="left:132.5px;top:228.90000000000003px;width:239px;height:17.1px;overflow:hidden;">
<div class="t" style="left:4.50px;top:-0.65px;font-size:11.68px;color:#111;white-space:nowrap;">Lumykras,</div>
</div>
<div class="a" style="left:372.5px;top:228.90000000000003px;width:264px;height:17.1px;overflow:hidden;">
<div class="t" style="left:4.50px;top:-0.65px;font-size:11.68px;color:#111;white-space:nowrap;">Carcinoma, Non-Small-Cell Lung</div>
</div>
<div class="a" style="left:637.5px;top:228.90000000000003px;width:248.5px;height:17.1px;overflow:hidden;">
<div class="t" style="left:4.50px;top:-0.65px;font-size:11.68px;color:#111;white-space:nowrap;">sotorasib</div>
</div>
<div class="a" style="left:131.5px;top:228.90000000000003px;width:1px;height:17.1px;background:rgba(255,255,255,0.8);"></div>
<div class="a" style="left:371.5px;top:228.90000000000003px;width:1px;height:17.1px;background:rgba(255,255,255,0.8);"></div>
<div class="a" style="left:636.5px;top:228.90000000000003px;width:1px;height:17.1px;background:rgba(255,255,255,0.8);"></div>
<div class="a" style="left:26px;top:246.0px;width:860.5px;height:17.1px;background:#ffffff;"></div>
<div class="a" style="left:30.5px;top:246.0px;width:1px;height:17.1px;background:rgba(255,255,255,0.6);"></div>
<div class="a" style="left:0px;top:246.0px;width:24.7px;height:17.1px;background:#ebebeb;"></div>
<div class="t" style="left:4.00px;top:245.35px;font-size:11.68px;color:#111;">36</div>
<div class="a" style="left:31.5px;top:246.0px;width:100px;height:17.1px;overflow:hidden;">
<div class="t" style="left:4.50px;top:-0.65px;font-size:11.68px;color:#111;white-space:nowrap;">Human</div>
</div>
<div class="a" style="left:132.5px;top:246.0px;width:239px;height:17.1px;overflow:hidden;">
<div class="t" style="left:4.50px;top:-0.65px;font-size:11.68px;color:#111;white-space:nowrap;">Noxafil,</div>
</div>
<div class="a" style="left:372.5px;top:246.0px;width:264px;height:17.1px;overflow:hidden;">
<div class="t" style="left:4.50px;top:-0.65px;font-size:11.68px;color:#111;white-space:nowrap;">Candidiasis; Mycoses; Coccidioidomycosis; Aspergillosis</div>
</div>
<div class="a" style="left:637.5px;top:246.0px;width:248.5px;height:17.1px;overflow:hidden;">
<div class="t" style="left:4.50px;top:-0.65px;font-size:11.68px;color:#111;white-space:nowrap;">posaconazole</div>
</div>
<div class="a" style="left:131.5px;top:246.0px;width:1px;height:17.1px;background:rgba(255,255,255,0.8);"></div>
<div class="a" style="left:371.5px;top:246.0px;width:1px;height:17.1px;background:rgba(255,255,255,0.8);"></div>
<div class="a" style="left:636.5px;top:246.0px;width:1px;height:17.1px;background:rgba(255,255,255,0.8);"></div>
<div class="a" style="left:26px;top:263.1px;width:860.5px;height:17.1px;background:#dde5f0;"></div>
<div class="a" style="left:30.5px;top:263.1px;width:1px;height:17.1px;background:rgba(255,255,255,0.6);"></div>
<div class="a" style="left:0px;top:263.1px;width:24.7px;height:17.1px;background:#ebebeb;"></div>
<div class="t" style="left:4.00px;top:262.45px;font-size:11.68px;color:#111;">37</div>
<div class="a" style="left:31.5px;top:263.1px;width:100px;height:17.1px;overflow:hidden;">
<div class="t" style="left:4.50px;top:-0.65px;font-size:11.68px;color:#111;white-space:nowrap;">Veterinary</div>
</div>
<div class="a" style="left:132.5px;top:263.1px;width:239px;height:17.1px;overflow:hidden;">
<div class="t" style="left:4.50px;top:-0.65px;font-size:11.68px;color:#111;white-space:nowrap;">CircoMax,</div>
</div>
<div class="a" style="left:372.5px;top:263.1px;width:264px;height:17.1px;overflow:hidden;">
<div class="t" style="left:4.50px;top:-0.65px;font-size:11.68px;color:#a0a0a0;white-space:nowrap;">[NULL]</div>
</div>
<div class="a" style="left:637.5px;top:263.1px;width:248.5px;height:17.1px;overflow:hidden;">
<div class="t" style="left:4.50px;top:-0.65px;font-size:11.68px;color:#111;white-space:nowrap;">Porcine circovirus vaccine (inactivated recombinant)</div>
</div>
<div class="a" style="left:131.5px;top:263.1px;width:1px;height:17.1px;background:rgba(255,255,255,0.8);"></div>
<div class="a" style="left:371.5px;top:263.1px;width:1px;height:17.1px;background:rgba(255,255,255,0.8);"></div>
<div class="a" style="left:636.5px;top:263.1px;width:1px;height:17.1px;background:rgba(255,255,255,0.8);"></div>
<div class="a" style="left:26px;top:280.20000000000005px;width:860.5px;height:17.1px;background:#ffffff;"></div>
<div class="a" style="left:30.5px;top:280.20000000000005px;width:1px;height:17.1px;background:rgba(255,255,255,0.6);"></div>
<div class="a" style="left:0px;top:280.20000000000005px;width:24.7px;height:17.1px;background:#ebebeb;"></div>
<div class="t" style="left:4.00px;top:279.55px;font-size:11.68px;color:#111;">38</div>
<div class="a" style="left:31.5px;top:280.20000000000005px;width:100px;height:17.1px;overflow:hidden;">
<div class="t" style="left:4.50px;top:-0.65px;font-size:11.68px;color:#111;white-space:nowrap;">Human</div>
</div>
<div class="a" style="left:132.5px;top:280.20000000000005px;width:239px;height:17.1px;overflow:hidden;">
<div class="t" style="left:4.50px;top:-0.65px;font-size:11.68px;color:#111;white-space:nowrap;">Vaxneuvance,</div>
</div>
<div class="a" style="left:372.5px;top:280.20000000000005px;width:264px;height:17.1px;overflow:hidden;">
<div class="t" style="left:4.50px;top:-0.65px;font-size:11.68px;color:#111;white-space:nowrap;">Pneumococcal Infections</div>
</div>
<div class="a" style="left:637.5px;top:280.20000000000005px;width:248.5px;height:17.1px;overflow:hidden;">
<div class="t" style="left:4.50px;top:-0.65px;font-size:11.68px;color:#111;white-space:nowrap;">pneumococcal polysaccharide conjugate vaccine</div>
</div>
<div class="a" style="left:131.5px;top:280.20000000000005px;width:1px;height:17.1px;background:rgba(255,255,255,0.8);"></div>
<div class="a" style="left:371.5px;top:280.20000000000005px;width:1px;height:17.1px;background:rgba(255,255,255,0.8);"></div>
<div class="a" style="left:636.5px;top:280.20000000000005px;width:1px;height:17.1px;background:rgba(255,255,255,0.8);"></div>
<div class="a" style="left:26px;top:297.30000000000007px;width:860.5px;height:17.1px;background:#dde5f0;"></div>
<div class="a" style="left:30.5px;top:297.30000000000007px;width:1px;height:17.1px;background:rgba(255,255,255,0.6);"></div>
<div class="a" style="left:0px;top:297.30000000000007px;width:24.7px;height:17.1px;background:#ebebeb;"></div>
<div class="t" style="left:4.00px;top:296.65px;font-size:11.68px;color:#111;">39</div>
<div class="a" style="left:31.5px;top:297.30000000000007px;width:100px;height:17.1px;overflow:hidden;">
<div class="t" style="left:4.50px;top:-0.65px;font-size:11.68px;color:#111;white-space:nowrap;">Human</div>
</div>
<div class="a" style="left:132.5px;top:297.30000000000007px;width:239px;height:17.1px;overflow:hidden;">
<div class="t" style="left:4.50px;top:-0.65px;font-size:11.68px;color:#111;white-space:nowrap;">Rybrevant,</div>
</div>
<div class="a" style="left:372.5px;top:297.30000000000007px;width:264px;height:17.1px;overflow:hidden;">
<div class="t" style="left:4.50px;top:-0.65px;font-size:11.68px;color:#111;white-space:nowrap;">Carcinoma, Non-Small-Cell Lung</div>
</div>
<div class="a" style="left:637.5px;top:297.30000000000007px;width:248.5px;height:17.1px;overflow:hidden;">
<div class="t" style="left:4.50px;top:-0.65px;font-size:11.68px;color:#111;white-space:nowrap;">amivantamab</div>
</div>
<div class="a" style="left:131.5px;top:297.30000000000007px;width:1px;height:17.1px;background:rgba(255,255,255,0.8);"></div>
<div class="a" style="left:371.5px;top:297.30000000000007px;width:1px;height:17.1px;background:rgba(255,255,255,0.8);"></div>
<div class="a" style="left:636.5px;top:297.30000000000007px;width:1px;height:17.1px;background:rgba(255,255,255,0.8);"></div>
<div class="a" style="left:26px;top:314.4000000000001px;width:860.5px;height:17.1px;background:#ffffff;"></div>
<div class="a" style="left:30.5px;top:314.4000000000001px;width:1px;height:17.1px;background:rgba(255,255,255,0.6);"></div>
<div class="a" style="left:0px;top:314.4000000000001px;width:24.7px;height:17.1px;background:#ebebeb;"></div>
<div class="t" style="left:4.00px;top:313.75px;font-size:11.68px;color:#111;">40</div>
<div class="a" style="left:31.5px;top:314.4000000000001px;width:100px;height:17.1px;overflow:hidden;">
<div class="t" style="left:4.50px;top:-0.65px;font-size:11.68px;color:#111;white-space:nowrap;">Human</div>
</div>
<div class="a" style="left:132.5px;top:314.4000000000001px;width:239px;height:17.1px;overflow:hidden;">
<div class="t" style="left:4.50px;top:-0.65px;font-size:11.68px;color:#111;white-space:nowrap;">Skyrizi,</div>
</div>
<div class="a" style="left:372.5px;top:314.4000000000001px;width:264px;height:17.1px;overflow:hidden;">
<div class="t" style="left:4.50px;top:-0.65px;font-size:11.68px;color:#111;white-space:nowrap;">Psoriasis</div>
</div>
<div class="a" style="left:637.5px;top:314.4000000000001px;width:248.5px;height:17.1px;overflow:hidden;">
<div class="t" style="left:4.50px;top:-0.65px;font-size:11.68px;color:#111;white-space:nowrap;">risankizumab</div>
</div>
<div class="a" style="left:131.5px;top:314.4000000000001px;width:1px;height:17.1px;background:rgba(255,255,255,0.8);"></div>
<div class="a" style="left:371.5px;top:314.4000000000001px;width:1px;height:17.1px;background:rgba(255,255,255,0.8);"></div>
<div class="a" style="left:636.5px;top:314.4000000000001px;width:1px;height:17.1px;background:rgba(255,255,255,0.8);"></div>
<div class="a" style="left:26px;top:331.5px;width:860.5px;height:17.1px;background:#dde5f0;"></div>
<div class="a" style="left:30.5px;top:331.5px;width:1px;height:17.1px;background:rgba(255,255,255,0.6);"></div>
<div class="a" style="left:0px;top:331.5px;width:24.7px;height:17.1px;background:#ebebeb;"></div>
<div class="t" style="left:4.00px;top:330.85px;font-size:11.68px;color:#111;">41</div>
<div class="a" style="left:31.5px;top:331.5px;width:100px;height:17.1px;overflow:hidden;">
<div class="t" style="left:4.50px;top:-0.65px;font-size:11.68px;color:#111;white-space:nowrap;">Human</div>
</div>
<div class="a" style="left:132.5px;top:331.5px;width:239px;height:17.1px;overflow:hidden;">
<div class="t" style="left:4.50px;top:-0.65px;font-size:11.68px;color:#111;white-space:nowrap;">Edistride,</div>
</div>
<div class="a" style="left:372.5px;top:331.5px;width:264px;height:17.1px;overflow:hidden;">
<div class="t" style="left:4.50px;top:-0.65px;font-size:11.68px;color:#111;white-space:nowrap;">Diabetes Mellitus, Type 2; Diabetes Mellitus, Type 1</div>
</div>
<div class="a" style="left:637.5px;top:331.5px;width:248.5px;height:17.1px;overflow:hidden;">
<div class="t" style="left:4.50px;top:-0.65px;font-size:11.68px;color:#111;white-space:nowrap;">dapagliflozin</div>
</div>
<div class="a" style="left:131.5px;top:331.5px;width:1px;height:17.1px;background:rgba(255,255,255,0.8);"></div>
<div class="a" style="left:371.5px;top:331.5px;width:1px;height:17.1px;background:rgba(255,255,255,0.8);"></div>
<div class="a" style="left:636.5px;top:331.5px;width:1px;height:17.1px;background:rgba(255,255,255,0.8);"></div>
<div class="a" style="left:26px;top:348.6px;width:860.5px;height:17.1px;background:#ffffff;"></div>
<div class="a" style="left:30.5px;top:348.6px;width:1px;height:17.1px;background:rgba(255,255,255,0.6);"></div>
<div class="a" style="left:0px;top:348.6px;width:24.7px;height:17.1px;background:#ebebeb;"></div>
<div class="t" style="left:4.00px;top:347.95px;font-size:11.68px;color:#111;">42</div>
<div class="a" style="left:31.5px;top:348.6px;width:100px;height:17.1px;overflow:hidden;">
<div class="t" style="left:4.50px;top:-0.65px;font-size:11.68px;color:#a0a0a0;white-space:nowrap;">[NULL]</div>
</div>
<div class="a" style="left:132.5px;top:348.6px;width:239px;height:17.1px;overflow:hidden;">
<div class="t" style="left:4.50px;top:-0.65px;font-size:11.68px;color:#111;white-space:nowrap;">Hizentra,</div>
</div>
<div class="a" style="left:372.5px;top:348.6px;width:264px;height:17.1px;overflow:hidden;">
<div class="t" style="left:4.50px;top:-0.65px;font-size:11.68px;color:#111;white-space:nowrap;">Immunologic Deficiency Syndromes</div>
</div>
<div class="a" style="left:637.5px;top:348.6px;width:248.5px;height:17.1px;overflow:hidden;">
<div class="t" style="left:4.50px;top:-0.65px;font-size:11.68px;color:#111;white-space:nowrap;">human normal immunoglobulin (SCIg)</div>
</div>
<div class="a" style="left:131.5px;top:348.6px;width:1px;height:17.1px;background:rgba(255,255,255,0.8);"></div>
<div class="a" style="left:371.5px;top:348.6px;width:1px;height:17.1px;background:rgba(255,255,255,0.8);"></div>
<div class="a" style="left:636.5px;top:348.6px;width:1px;height:17.1px;background:rgba(255,255,255,0.8);"></div>
<div class="a" style="left:26px;top:365.70000000000005px;width:860.5px;height:17.1px;background:#dde5f0;"></div>
<div class="a" style="left:30.5px;top:365.70000000000005px;width:1px;height:17.1px;background:rgba(255,255,255,0.6);"></div>
<div class="a" style="left:0px;top:365.70000000000005px;width:24.7px;height:17.1px;background:#ebebeb;"></div>
<div class="t" style="left:4.00px;top:365.05px;font-size:11.68px;color:#111;">43</div>
<div class="a" style="left:31.5px;top:365.70000000000005px;width:100px;height:17.1px;overflow:hidden;">
<div class="t" style="left:4.50px;top:-0.65px;font-size:11.68px;color:#111;white-space:nowrap;">Human</div>
</div>
<div class="a" style="left:132.5px;top:365.70000000000005px;width:239px;height:17.1px;overflow:hidden;">
<div class="t" style="left:4.50px;top:-0.65px;font-size:11.68px;color:#111;white-space:nowrap;">Forxiga,</div>
</div>
<div class="a" style="left:372.5px;top:365.70000000000005px;width:264px;height:17.1px;overflow:hidden;">
<div class="t" style="left:4.50px;top:-0.65px;font-size:11.68px;color:#111;white-space:nowrap;">Diabetes Mellitus, Type 2</div>
</div>
<div class="a" style="left:637.5px;top:365.70000000000005px;width:248.5px;height:17.1px;overflow:hidden;">
<div class="t" style="left:4.50px;top:-0.65px;font-size:11.68px;color:#111;white-space:nowrap;">dapagliflozin</div>
</div>
<div class="a" style="left:131.5px;top:365.70000000000005px;width:1px;height:17.1px;background:rgba(255,255,255,0.8);"></div>
<div class="a" style="left:371.5px;top:365.70000000000005px;width:1px;height:17.1px;background:rgba(255,255,255,0.8);"></div>
<div class="a" style="left:636.5px;top:365.70000000000005px;width:1px;height:17.1px;background:rgba(255,255,255,0.8);"></div>
<div class="a" style="left:26px;top:382.80000000000007px;width:860.5px;height:17.1px;background:#ffffff;"></div>
<div class="a" style="left:30.5px;top:382.80000000000007px;width:1px;height:17.1px;background:rgba(255,255,255,0.6);"></div>
<div class="a" style="left:0px;top:382.80000000000007px;width:24.7px;height:17.1px;background:#ebebeb;"></div>
<div class="t" style="left:4.00px;top:382.15px;font-size:11.68px;color:#111;">44</div>
<div class="a" style="left:31.5px;top:382.80000000000007px;width:100px;height:17.1px;overflow:hidden;">
<div class="t" style="left:4.50px;top:-0.65px;font-size:11.68px;color:#111;white-space:nowrap;">Human</div>
</div>
<div class="a" style="left:132.5px;top:382.80000000000007px;width:239px;height:17.1px;overflow:hidden;">
<div class="t" style="left:4.50px;top:-0.65px;font-size:11.68px;color:#111;white-space:nowrap;">Repatha,</div>
</div>
<div class="a" style="left:372.5px;top:382.80000000000007px;width:264px;height:17.1px;overflow:hidden;">
<div class="t" style="left:4.50px;top:-0.65px;font-size:11.68px;color:#111;white-space:nowrap;">Dyslipidemias; Hypercholesterolemia</div>
</div>
<div class="a" style="left:637.5px;top:382.80000000000007px;width:248.5px;height:17.1px;overflow:hidden;">
<div class="t" style="left:4.50px;top:-0.65px;font-size:11.68px;color:#111;white-space:nowrap;">evolocumab</div>
</div>
<div class="a" style="left:131.5px;top:382.80000000000007px;width:1px;height:17.1px;background:rgba(255,255,255,0.8);"></div>
<div class="a" style="left:371.5px;top:382.80000000000007px;width:1px;height:17.1px;background:rgba(255,255,255,0.8);"></div>
<div class="a" style="left:636.5px;top:382.80000000000007px;width:1px;height:17.1px;background:rgba(255,255,255,0.8);"></div>
<div class="a" style="left:26px;top:399.9000000000001px;width:860.5px;height:17.1px;background:#dde5f0;"></div>
<div class="a" style="left:30.5px;top:399.9000000000001px;width:1px;height:17.1px;background:rgba(255,255,255,0.6);"></div>
<div class="a" style="left:0px;top:399.9000000000001px;width:24.7px;height:17.1px;background:#ebebeb;"></div>
<div class="t" style="left:4.00px;top:399.25px;font-size:11.68px;color:#111;">45</div>
<div class="a" style="left:31.5px;top:399.9000000000001px;width:100px;height:17.1px;overflow:hidden;">
<div class="t" style="left:4.50px;top:-0.65px;font-size:11.68px;color:#111;white-space:nowrap;">Human</div>
</div>
<div class="a" style="left:132.5px;top:399.9000000000001px;width:239px;height:17.1px;overflow:hidden;">
<div class="t" style="left:4.50px;top:-0.65px;font-size:11.68px;color:#111;white-space:nowrap;">Sitagliptin SUN,</div>
</div>
<div class="a" style="left:372.5px;top:399.9000000000001px;width:264px;height:17.1px;overflow:hidden;">
<div class="t" style="left:4.50px;top:-0.65px;font-size:11.68px;color:#111;white-space:nowrap;">Diabetes Mellitus, Type 2</div>
</div>
<div class="a" style="left:637.5px;top:399.9000000000001px;width:248.5px;height:17.1px;overflow:hidden;">
<div class="t" style="left:4.50px;top:-0.65px;font-size:11.68px;color:#111;white-space:nowrap;">sitagliptin fumarate</div>
</div>
<div class="a" style="left:131.5px;top:399.9000000000001px;width:1px;height:17.1px;background:rgba(255,255,255,0.8);"></div>
<div class="a" style="left:371.5px;top:399.9000000000001px;width:1px;height:17.1px;background:rgba(255,255,255,0.8);"></div>
<div class="a" style="left:636.5px;top:399.9000000000001px;width:1px;height:17.1px;background:rgba(255,255,255,0.8);"></div>
<div class="a" style="left:26px;top:417.0px;width:860.5px;height:17.1px;background:#ffffff;"></div>
<div class="a" style="left:30.5px;top:417.0px;width:1px;height:17.1px;background:rgba(255,255,255,0.6);"></div>
<div class="a" style="left:0px;top:417.0px;width:24.7px;height:17.1px;background:#ebebeb;"></div>
<div class="t" style="left:4.00px;top:416.35px;font-size:11.68px;color:#111;">46</div>
<div class="a" style="left:31.5px;top:417.0px;width:100px;height:17.1px;overflow:hidden;">
<div class="t" style="left:4.50px;top:-0.65px;font-size:11.68px;color:#111;white-space:nowrap;">Veterinary</div>
</div>
<div class="a" style="left:132.5px;top:417.0px;width:239px;height:17.1px;overflow:hidden;">
<div class="t" style="left:4.50px;top:-0.65px;font-size:11.68px;color:#111;white-space:nowrap;">Zenalpha,</div>
</div>
<div class="a" style="left:372.5px;top:417.0px;width:264px;height:17.1px;overflow:hidden;">
<div class="t" style="left:4.50px;top:-0.65px;font-size:11.68px;color:#a0a0a0;white-space:nowrap;">[NULL]</div>
</div>
<div class="a" style="left:637.5px;top:417.0px;width:248.5px;height:17.1px;overflow:hidden;">
<div class="t" style="left:4.50px;top:-0.65px;font-size:11.68px;color:#111;white-space:nowrap;">medetomidine hydrochloride, vatinoxan hydrochloride</div>
</div>
<div class="a" style="left:131.5px;top:417.0px;width:1px;height:17.1px;background:rgba(255,255,255,0.8);"></div>
<div class="a" style="left:371.5px;top:417.0px;width:1px;height:17.1px;background:rgba(255,255,255,0.8);"></div>
<div class="a" style="left:636.5px;top:417.0px;width:1px;height:17.1px;background:rgba(255,255,255,0.8);"></div>
<div class="a" style="left:26px;top:434.1px;width:860.5px;height:17.1px;background:#dde5f0;"></div>
<div class="a" style="left:30.5px;top:434.1px;width:1px;height:17.1px;background:rgba(255,255,255,0.6);"></div>
<div class="a" style="left:0px;top:434.1px;width:24.7px;height:17.1px;background:#ebebeb;"></div>
<div class="t" style="left:4.00px;top:433.45px;font-size:11.68px;color:#111;">47</div>
<div class="a" style="left:31.5px;top:434.1px;width:100px;height:17.1px;overflow:hidden;">
<div class="t" style="left:4.50px;top:-0.65px;font-size:11.68px;color:#111;white-space:nowrap;">Veterinary</div>
</div>
<div class="a" style="left:132.5px;top:434.1px;width:239px;height:17.1px;overflow:hidden;">
<div class="t" style="left:4.50px;top:-0.65px;font-size:11.68px;color:#111;white-space:nowrap;">Suiseng Diff/A,</div>
</div>
<div class="a" style="left:372.5px;top:434.1px;width:264px;height:17.1px;overflow:hidden;">
<div class="t" style="left:4.50px;top:-0.65px;font-size:11.68px;color:#a0a0a0;white-space:nowrap;">[NULL]</div>
</div>
<div class="a" style="left:637.5px;top:434.1px;width:248.5px;height:17.1px;overflow:hidden;">
<div class="t" style="left:4.50px;top:-0.65px;font-size:11.68px;color:#111;white-space:nowrap;">clostridioides difficile, clostridium perfringens vaccine</div>
</div>
<div class="a" style="left:131.5px;top:434.1px;width:1px;height:17.1px;background:rgba(255,255,255,0.8);"></div>
<div class="a" style="left:371.5px;top:434.1px;width:1px;height:17.1px;background:rgba(255,255,255,0.8);"></div>
<div class="a" style="left:636.5px;top:434.1px;width:1px;height:17.1px;background:rgba(255,255,255,0.8);"></div>
<div class="a" style="left:26px;top:451.20000000000005px;width:860.5px;height:17.1px;background:#ffffff;"></div>
<div class="a" style="left:30.5px;top:451.20000000000005px;width:1px;height:17.1px;background:rgba(255,255,255,0.6);"></div>
<div class="a" style="left:0px;top:451.20000000000005px;width:24.7px;height:17.1px;background:#ebebeb;"></div>
<div class="t" style="left:4.00px;top:450.55px;font-size:11.68px;color:#111;">48</div>
<div class="a" style="left:31.5px;top:451.20000000000005px;width:100px;height:17.1px;overflow:hidden;">
<div class="t" style="left:4.50px;top:-0.65px;font-size:11.68px;color:#111;white-space:nowrap;">Veterinary</div>
</div>
<div class="a" style="left:132.5px;top:451.20000000000005px;width:239px;height:17.1px;overflow:hidden;">
<div class="t" style="left:4.50px;top:-0.65px;font-size:11.68px;color:#111;white-space:nowrap;">NexGard Combo,</div>
</div>
<div class="a" style="left:372.5px;top:451.20000000000005px;width:264px;height:17.1px;overflow:hidden;">
<div class="t" style="left:4.50px;top:-0.65px;font-size:11.68px;color:#a0a0a0;white-space:nowrap;">[NULL]</div>
</div>
<div class="a" style="left:637.5px;top:451.20000000000005px;width:248.5px;height:17.1px;overflow:hidden;">
<div class="t" style="left:4.50px;top:-0.65px;font-size:11.68px;color:#111;white-space:nowrap;">esafoxolaner, eprinomectin, praziquantel</div>
</div>
<div class="a" style="left:131.5px;top:451.20000000000005px;width:1px;height:17.1px;background:rgba(255,255,255,0.8);"></div>
<div class="a" style="left:371.5px;top:451.20000000000005px;width:1px;height:17.1px;background:rgba(255,255,255,0.8);"></div>
<div class="a" style="left:636.5px;top:451.20000000000005px;width:1px;height:17.1px;background:rgba(255,255,255,0.8);"></div>
<div class="a" style="left:26px;top:468.30000000000007px;width:860.5px;height:17.1px;background:#dde5f0;"></div>
<div class="a" style="left:30.5px;top:468.30000000000007px;width:1px;height:17.1px;background:rgba(255,255,255,0.6);"></div>
<div class="a" style="left:0px;top:468.30000000000007px;width:24.7px;height:17.1px;background:#ebebeb;"></div>
<div class="t" style="left:4.00px;top:467.65px;font-size:11.68px;color:#111;">49</div>
<div class="a" style="left:31.5px;top:468.30000000000007px;width:100px;height:17.1px;overflow:hidden;">
<div class="t" style="left:4.50px;top:-0.65px;font-size:11.68px;color:#111;white-space:nowrap;">Veterinary</div>
</div>
<div class="a" style="left:132.5px;top:468.30000000000007px;width:239px;height:17.1px;overflow:hidden;">
<div class="t" style="left:4.50px;top:-0.65px;font-size:11.68px;color:#111;white-space:nowrap;">Imoxat,</div>
</div>
<div class="a" style="left:372.5px;top:468.30000000000007px;width:264px;height:17.1px;overflow:hidden;">
<div class="t" style="left:4.50px;top:-0.65px;font-size:11.68px;color:#a0a0a0;white-space:nowrap;">[NULL]</div>
</div>
<div class="a" style="left:637.5px;top:468.30000000000007px;width:248.5px;height:17.1px;overflow:hidden;">
<div class="t" style="left:4.50px;top:-0.65px;font-size:11.68px;color:#111;white-space:nowrap;">imidacloprid, moxidectin</div>
</div>
<div class="a" style="left:131.5px;top:468.30000000000007px;width:1px;height:17.1px;background:rgba(255,255,255,0.8);"></div>
<div class="a" style="left:371.5px;top:468.30000000000007px;width:1px;height:17.1px;background:rgba(255,255,255,0.8);"></div>
<div class="a" style="left:636.5px;top:468.30000000000007px;width:1px;height:17.1px;background:rgba(255,255,255,0.8);"></div>
<div class="a" style="left:26px;top:485.4000000000001px;width:860.5px;height:17.1px;background:#ffffff;"></div>
<div class="a" style="left:30.5px;top:485.4000000000001px;width:1px;height:17.1px;background:rgba(255,255,255,0.6);"></div>
<div class="a" style="left:0px;top:485.4000000000001px;width:24.7px;height:17.1px;background:#ebebeb;"></div>
<div class="t" style="left:4.00px;top:484.75px;font-size:11.68px;color:#111;">50</div>
<div class="a" style="left:31.5px;top:485.4000000000001px;width:100px;height:17.1px;overflow:hidden;">
<div class="t" style="left:4.50px;top:-0.65px;font-size:11.68px;color:#111;white-space:nowrap;">Veterinary</div>
</div>
<div class="a" style="left:132.5px;top:485.4000000000001px;width:239px;height:17.1px;overflow:hidden;">
<div class="t" style="left:4.50px;top:-0.65px;font-size:11.68px;color:#111;white-space:nowrap;">Apoquel,</div>
</div>
<div class="a" style="left:372.5px;top:485.4000000000001px;width:264px;height:17.1px;overflow:hidden;">
<div class="t" style="left:4.50px;top:-0.65px;font-size:11.68px;color:#a0a0a0;white-space:nowrap;">[NULL]</div>
</div>
<div class="a" style="left:637.5px;top:485.4000000000001px;width:248.5px;height:17.1px;overflow:hidden;">
<div class="t" style="left:4.50px;top:-0.65px;font-size:11.68px;color:#111;white-space:nowrap;">oclacitinib maleate</div>
</div>
<div class="a" style="left:131.5px;top:485.4000000000001px;width:1px;height:17.1px;background:rgba(255,255,255,0.8);"></div>
<div class="a" style="left:371.5px;top:485.4000000000001px;width:1px;height:17.1px;background:rgba(255,255,255,0.8);"></div>
<div class="a" style="left:636.5px;top:485.4000000000001px;width:1px;height:17.1px;background:rgba(255,255,255,0.8);"></div>
<div class="a" style="left:26px;top:502.5000000000001px;width:860.5px;height:17.1px;background:#dde5f0;"></div>
<div class="a" style="left:30.5px;top:502.5000000000001px;width:1px;height:17.1px;background:rgba(255,255,255,0.6);"></div>
<div class="a" style="left:0px;top:502.5000000000001px;width:24.7px;height:17.1px;background:#ebebeb;"></div>
<div class="t" style="left:4.00px;top:501.85px;font-size:11.68px;color:#111;">51</div>
<div class="a" style="left:31.5px;top:502.5000000000001px;width:100px;height:17.1px;overflow:hidden;">
<div class="t" style="left:4.50px;top:-0.65px;font-size:11.68px;color:#111;white-space:nowrap;">Human</div>
</div>
<div class="a" style="left:132.5px;top:502.5000000000001px;width:239px;height:17.1px;overflow:hidden;">
<div class="t" style="left:4.50px;top:-0.65px;font-size:11.68px;color:#111;white-space:nowrap;">Steglatro,</div>
</div>
<div class="a" style="left:372.5px;top:502.5000000000001px;width:264px;height:17.1px;overflow:hidden;">
<div class="t" style="left:4.50px;top:-0.65px;font-size:11.68px;color:#111;white-space:nowrap;">Diabetes Mellitus, Type 2</div>
</div>
<div class="a" style="left:637.5px;top:502.5000000000001px;width:248.5px;height:17.1px;overflow:hidden;">
<div class="t" style="left:4.50px;top:-0.65px;font-size:11.68px;color:#111;white-space:nowrap;">ertugliflozin</div>
</div>
<div class="a" style="left:131.5px;top:502.5000000000001px;width:1px;height:17.1px;background:rgba(255,255,255,0.8);"></div>
<div class="a" style="left:371.5px;top:502.5000000000001px;width:1px;height:17.1px;background:rgba(255,255,255,0.8);"></div>
<div class="a" style="left:636.5px;top:502.5000000000001px;width:1px;height:17.1px;background:rgba(255,255,255,0.8);"></div>
<svg class="a" style="left:0px;top:0px;" width="887" height="512" viewBox="0 0 887 512"><g fill="#2e2e2e"><rect x="0" y="39.50" width="25.60" height="1.3"/><rect x="0" y="56.60" width="25.60" height="1.3"/><rect x="0" y="73.70" width="25.60" height="1.3"/><rect x="0" y="90.80" width="25.60" height="1.3"/><rect x="0" y="107.90" width="25.60" height="1.3"/><rect x="0" y="125.00" width="25.60" height="1.3"/><rect x="0" y="142.10" width="25.60" height="1.3"/><rect x="0" y="159.20" width="25.60" height="1.3"/><rect x="0" y="176.30" width="25.60" height="1.3"/><rect x="0" y="193.40" width="25.60" height="1.3"/><rect x="0" y="210.50" width="25.60" height="1.3"/><rect x="0" y="227.60" width="25.60" height="1.3"/><rect x="0" y="244.70" width="25.60" height="1.3"/><rect x="0" y="261.80" width="25.60" height="1.3"/><rect x="0" y="278.90" width="25.60" height="1.3"/><rect x="0" y="296.00" width="25.60" height="1.3"/><rect x="0" y="313.10" width="25.60" height="1.3"/><rect x="0" y="330.20" width="25.60" height="1.3"/><rect x="0" y="347.30" width="25.60" height="1.3"/><rect x="0" y="364.40" width="25.60" height="1.3"/><rect x="0" y="381.50" width="25.60" height="1.3"/><rect x="0" y="398.60" width="25.60" height="1.3"/><rect x="0" y="415.70" width="25.60" height="1.3"/><rect x="0" y="432.80" width="25.60" height="1.3"/><rect x="0" y="449.90" width="25.60" height="1.3"/><rect x="0" y="467.00" width="25.60" height="1.3"/><rect x="0" y="484.10" width="25.60" height="1.3"/><rect x="0" y="501.20" width="25.60" height="1.3"/><rect x="0" y="518.30" width="25.60" height="1.3"/><rect x="24.70" y="22.80" width="1.3" height="500"/></g></svg>
</div>
<svg class="a" style="left:1263.2px;top:119.1px;" width="13" height="12.6" viewBox="0 0 13 12.6"><path d="M0.6 6.5V0.6H12.4V12H5.5" fill="none" stroke="#3d8fd6" stroke-width="1.2"/><rect x="4.8" y="1.2" width="7" height="6.3" fill="#8cc2ee"/><rect x="10" y="0.6" width="2.4" height="11.4" fill="#3d8fd6"/><path d="M6.8 1.2v6.3M8.6 1.2v6.3" stroke="#3d8fd6" stroke-width="0.7"/><circle cx="2.8" cy="10.4" r="2" fill="#3d8fd6"/><circle cx="2.8" cy="10.4" r="0.9" fill="#cfefff"/></svg>
<div class="t" style="left:1249px;top:145px;width:40px;line-height:12px;height:12px;text-align:center;font-size:11.2px;color:#1e1e1e;transform:rotate(90deg);transform-origin:50% 50%;">Panels</div>
<svg class="a" style="left:1262.8px;top:183.5px;" width="12.2" height="11.2" viewBox="0 0 12.2 11.2"><rect x="0" y="0" width="5.4" height="5" rx="0.8" fill="#3d8fd6"/><rect x="6.8" y="0" width="5.4" height="5" rx="0.8" fill="#3d8fd6"/><rect x="0" y="6.2" width="5.4" height="5" rx="0.8" fill="#3d8fd6"/><rect x="6.8" y="6.2" width="5.4" height="5" rx="0.8" fill="#f0a030"/><rect x="1.8" y="1.8" width="1.8" height="1.4" fill="#cfe8fb"/><rect x="8.6" y="1.8" width="1.8" height="1.4" fill="#cfe8fb"/><rect x="1.8" y="8" width="1.8" height="1.4" fill="#cfe8fb"/></svg>
<svg class="a" style="left:1263px;top:202px;" width="13" height="13" viewBox="0 0 13 13"><circle cx="6.5" cy="6.5" r="5.8" fill="none" stroke="#3d8fd6" stroke-width="1.2"/><circle cx="5" cy="5" r="0.9" fill="#3d8fd6"/><circle cx="8" cy="5" r="0.9" fill="#3d8fd6"/><circle cx="5" cy="8" r="0.9" fill="#3d8fd6"/><circle cx="8" cy="8" r="0.9" fill="#3d8fd6"/></svg>
<svg class="a" style="left:1262.5px;top:220.5px;" width="13" height="11.5" viewBox="0 0 13 11.5"><rect x="0" y="0" width="13" height="11.5" rx="1" fill="#3d8fd6"/><g fill="#d8ecfb"><rect x="1.5" y="2" width="1.4" height="1.2"/><rect x="4" y="2" width="1.4" height="1.2"/><rect x="6.5" y="2" width="1.4" height="1.2"/><rect x="9" y="2" width="1.4" height="1.2"/><rect x="2.7" y="4.2" width="1.4" height="1.2"/><rect x="5.2" y="4.2" width="1.4" height="1.2"/><rect x="7.7" y="4.2" width="1.4" height="1.2"/><rect x="10.2" y="4.2" width="1.4" height="1.2"/><rect x="1.5" y="6.4" width="1.4" height="1.2"/><rect x="4" y="6.4" width="1.4" height="1.2"/><rect x="6.5" y="6.4" width="1.4" height="1.2"/><rect x="9" y="6.4" width="1.4" height="1.2"/></g><rect x="1.3" y="8" width="10.4" height="2.3" fill="#fff"/></svg>
<svg class="a" style="left:1263px;top:239px;" width="13" height="13" viewBox="0 0 13 13"><rect x="0.6" y="4" width="11.8" height="8.4" fill="#fff" stroke="#3d8fd6" stroke-width="1.1"/><rect x="0.6" y="4" width="11.8" height="2.5" fill="#3d8fd6"/><path d="M0.6 9.3h11.8M4.5 4v8.4M8.5 4v8.4" stroke="#3d8fd6" stroke-width="0.9"/><rect x="5.2" y="4" width="2.6" height="8.4" fill="#f0a030" opacity="0.85"/><circle cx="6.5" cy="1.6" r="1.1" fill="#f0a030"/></svg>
<svg class="a" style="left:1263px;top:258.5px;" width="13" height="13" viewBox="0 0 13 13"><rect x="0.6" y="0.6" width="11.8" height="11.8" fill="#fff" stroke="#3d8fd6" stroke-width="1.2"/><rect x="0.6" y="0.6" width="11.8" height="2.6" fill="#3d8fd6"/><rect x="1.2" y="3.2" width="5.5" height="4.5" fill="#9fcdf2"/><rect x="6.5" y="8.5" width="6.5" height="4.5" fill="#fff"/><path d="M7.5 10.5h1.2M9.5 10.5h1.2M11.5 10.5h1.2" stroke="#555" stroke-width="0.9"/></svg>
<svg class="a" style="left:356px;top:626px;" width="14" height="13" viewBox="0 0 14 13"><path d="M3 2.5h5M0.8 5v7h11V7" fill="none" stroke="#3d8fd6" stroke-width="1.3"/><path d="M0.8 5l2.5-2.5" stroke="#3d8fd6" stroke-width="1.3"/><circle cx="11" cy="3" r="2.6" fill="#3d8fd6"/><path d="M9.8 3h2.4" stroke="#fff" stroke-width="0.8"/></svg>
<svg class="a" style="left:379px;top:628px;" width="12" height="13" viewBox="0 0 12 13"><path d="M1.5 6A4.5 4.5 0 0 1 9 2.5M10.5 7A4.5 4.5 0 0 1 3 10.5" fill="none" stroke="#7fb3e3" stroke-width="1.4"/><path d="M8 0.5l2 2.5-3 .8M4 12.5l-2-2.5 3-.8" fill="none" stroke="#7fb3e3" stroke-width="1.2"/></svg>
<div class="t" style="left:393.70px;top:624.50px;font-size:9.80px;color:#8a8a8a;">Refresh</div>
<svg class="a" style="left:433.5px;top:633.5px;" width="4.5" height="3.5" viewBox="0 0 4.5 3.5"><path d="M0 0H4.5L2.25 3.5Z" fill="#222"/></svg>
<svg class="a" style="left:443px;top:628px;" width="2" height="13" viewBox="0 0 2 13"><circle cx="1" cy="0.8" r="0.7" fill="#8a8a8a"/><circle cx="1" cy="4.4" r="0.7" fill="#8a8a8a"/><circle cx="1" cy="8.0" r="0.7" fill="#8a8a8a"/><circle cx="1" cy="11.6" r="0.7" fill="#8a8a8a"/></svg>
<svg class="a" style="left:450px;top:628px;" width="13" height="13" viewBox="0 0 13 13"><circle cx="6.5" cy="6.5" r="5.7" fill="none" stroke="#a9d8a2" stroke-width="1.1"/><path d="M3.8 6.8l2 2 3.6-4" fill="none" stroke="#a9d8a2" stroke-width="1.1"/></svg>
<div class="t" style="left:465.50px;top:624.50px;font-size:9.21px;color:#c2c2c2;">Save</div>
<svg class="a" style="left:492.5px;top:633.5px;" width="3.5" height="3" viewBox="0 0 3.5 3"><path d="M0 0H3.5L1.75 3Z" fill="#c8c8c8"/></svg>
<svg class="a" style="left:501.5px;top:628px;" width="12" height="12" viewBox="0 0 12 12"><rect x="0.6" y="0.6" width="10.8" height="10.8" fill="#fff" stroke="#eda5a5" stroke-width="1.1"/><path d="M3.5 3.5l5 5M8.5 3.5l-5 5" stroke="#eda5a5" stroke-width="1.1"/></svg>
<div class="t" style="left:516.50px;top:624.50px;font-size:9.96px;color:#c2c2c2;">Cancel</div>
<div class="a" style="left:553px;top:628px;width:1px;height:14px;background:#e3e3e3;"></div>
<svg class="a" style="left:559.5px;top:628px;" width="14" height="13" viewBox="0 0 14 13"><path d="M0.5 1.5h12M0.5 6h7M0.5 10.5h4" stroke="#2f82c8" stroke-width="1.8"/><path d="M6.5 12L12.5 6" stroke="#2f82c8" stroke-width="2"/></svg>
<svg class="a" style="left:578px;top:628px;" width="14" height="13" viewBox="0 0 14 13"><path d="M0.5 1.5h12M0.5 6h5.5M0.5 10.5h5.5" stroke="#2f82c8" stroke-width="1.8"/><path d="M10 5.5v7.5M6.3 9.3h7.4" stroke="#27a33b" stroke-width="1.9"/></svg>
<svg class="a" style="left:597px;top:628px;" width="14" height="13" viewBox="0 0 14 13"><path d="M0.5 1.5h12M0.5 6h4M0.5 10.5h4" stroke="#2f82c8" stroke-width="1.8"/><path d="M7 5.5A3.6 3.6 0 0 0 7 12.5M11.5 5.5A3.6 3.6 0 0 1 11.5 12.5" fill="none" stroke="#2f82c8" stroke-width="1"/><path d="M9.25 7v4M7.25 9h4" stroke="#27a33b" stroke-width="1.3"/></svg>
<svg class="a" style="left:616px;top:628px;" width="14" height="13" viewBox="0 0 14 13"><path d="M0.5 1.5h12M0.5 6h5.5M0.5 10.5h5.5" stroke="#2f82c8" stroke-width="1.8"/><path d="M6.5 10h7" stroke="#d93025" stroke-width="1.9"/></svg>
<svg class="a" style="left:635px;top:628px;" width="2" height="13" viewBox="0 0 2 13"><circle cx="1" cy="0.8" r="0.7" fill="#8a8a8a"/><circle cx="1" cy="4.4" r="0.7" fill="#8a8a8a"/><circle cx="1" cy="8.0" r="0.7" fill="#8a8a8a"/><circle cx="1" cy="11.6" r="0.7" fill="#8a8a8a"/></svg>
<svg class="a" style="left:643px;top:628.5px;" width="9" height="12" viewBox="0 0 9 12"><path d="M1 0v12" stroke="#9cc3e6" stroke-width="1.4"/><path d="M8 1L3 6l5 5" fill="none" stroke="#9cc3e6" stroke-width="1.4"/></svg>
<svg class="a" style="left:663px;top:629px;" width="6" height="11" viewBox="0 0 6 11"><path d="M5.5 0.5L1 5.5l4.5 5" fill="none" stroke="#9cc3e6" stroke-width="1.4"/></svg>
<svg class="a" style="left:684px;top:629px;" width="6" height="11" viewBox="0 0 6 11"><path d="M0.5 0.5L5 5.5l-4.5 5" fill="none" stroke="#2e7fc4" stroke-width="1.6"/></svg>
<svg class="a" style="left:699px;top:628.5px;" width="10" height="12" viewBox="0 0 10 12"><path d="M1 1l5 5-5 5" fill="none" stroke="#2e7fc4" stroke-width="1.6"/><path d="M8.5 0v12" stroke="#2e7fc4" stroke-width="1.6"/></svg>
<svg class="a" style="left:717px;top:628px;" width="12" height="12" viewBox="0 0 12 12"><path d="M0.5 3.5v-3h3M8.5 0.5h3v3M11.5 8.5v3h-3M3.5 11.5h-3v-3" fill="none" stroke="#b9d3ea" stroke-width="1"/><rect x="3" y="3" width="6" height="6" fill="#dcebf7" stroke="#b9d3ea" stroke-width="1"/></svg>
<svg class="a" style="left:736px;top:628px;" width="2" height="13" viewBox="0 0 2 13"><circle cx="1" cy="0.8" r="0.7" fill="#8a8a8a"/><circle cx="1" cy="4.4" r="0.7" fill="#8a8a8a"/><circle cx="1" cy="8.0" r="0.7" fill="#8a8a8a"/><circle cx="1" cy="11.6" r="0.7" fill="#8a8a8a"/></svg>
<svg class="a" style="left:744px;top:627px;" width="14" height="14" viewBox="0 0 14 14"><path d="M7 1v8M3.5 4.5L7 1l3.5 3.5" fill="none" stroke="#2e7fc4" stroke-width="1.7"/><path d="M1 8v5h12V8" fill="none" stroke="#2e7fc4" stroke-width="1.7"/></svg>
<div class="t" style="left:760.20px;top:624.50px;font-size:10.07px;color:#8a8a8a;">Export data</div>
<svg class="a" style="left:816.5px;top:633.5px;" width="4.5" height="3.5" viewBox="0 0 4.5 3.5"><path d="M0 0H4.5L2.25 3.5Z" fill="#222"/></svg>
<svg class="a" style="left:826px;top:628px;" width="2" height="13" viewBox="0 0 2 13"><circle cx="1" cy="0.8" r="0.7" fill="#8a8a8a"/><circle cx="1" cy="4.4" r="0.7" fill="#8a8a8a"/><circle cx="1" cy="8.0" r="0.7" fill="#8a8a8a"/><circle cx="1" cy="11.6" r="0.7" fill="#8a8a8a"/></svg>
<svg class="a" style="left:832.9px;top:627.9px;" width="13" height="13" viewBox="0 0 13 13"><path d="M4.97 1.94L5.08 0.16L7.92 0.16L8.03 1.94L9.68 2.89L11.28 2.10L12.70 4.56L11.22 5.55L11.22 7.45L12.70 8.44L11.28 10.90L9.68 10.11L8.03 11.06L7.92 12.84L5.08 12.84L4.97 11.06L3.32 10.11L1.72 10.90L0.30 8.44L1.78 7.45L1.78 5.55L0.30 4.56L1.72 2.10L3.32 2.89Z" fill="#3585cf"/><circle cx="6.5" cy="6.5" r="3.25" fill="#3585cf"/><circle cx="6.5" cy="6.5" r="1.95" fill="#8fc3ee"/></svg>
<div class="a" style="left:852px;top:625px;width:57.5px;height:17.8px;background:#fff;border-bottom:1px solid #dcdcdc;box-sizing:border-box;"></div>
<div class="t" style="left:855.50px;top:624.50px;font-size:11.09px;color:#1e1e1e;">200</div>
<svg class="a" style="left:916px;top:628px;" width="14" height="13" viewBox="0 0 14 13"><path d="M0.8 1.2h3.2c1.8 0 3 1.2 3 3c0-1.8 1.2-3 3-3h3.2" fill="none" stroke="#3585cf" stroke-width="1.5"/><path d="M7 4v3.5" stroke="#3585cf" stroke-width="1.4"/><path d="M4.8 5.8L7 8.2L9.2 5.8Z" fill="#3585cf"/><path d="M1 8.5v3.5h12V8.5" fill="none" stroke="#3585cf" stroke-width="1.5"/></svg>
<div class="t" style="left:934.60px;top:625.00px;font-size:10.90px;color:#1e1e1e;">81</div>
<svg class="a" style="left:951px;top:628px;" width="2" height="13" viewBox="0 0 2 13"><circle cx="1" cy="0.8" r="0.7" fill="#8a8a8a"/><circle cx="1" cy="4.4" r="0.7" fill="#8a8a8a"/><circle cx="1" cy="8.0" r="0.7" fill="#8a8a8a"/><circle cx="1" cy="11.6" r="0.7" fill="#8a8a8a"/></svg>
<svg class="a" style="left:383.5px;top:655px;" width="7" height="2" viewBox="0 0 7 2"><circle cx="1" cy="1" r="0.7" fill="#888"/><circle cx="3.5" cy="1" r="0.7" fill="#888"/><circle cx="6" cy="1" r="0.7" fill="#888"/></svg>
<div class="t" style="left:400.60px;top:645.50px;font-size:11.03px;color:#1e1e1e;">81 row(s) fetched - 225ms (1ms fetch), on 2023-03-28 at 14:51:01</div>
<svg class="a" style="left:1263px;top:650px;" width="13" height="12" viewBox="0 0 13 12"><path d="M0.6 0.6h4v10.8h-4z" fill="#2e7fc4"/><path d="M6 1.5h4a2 2 0 0 1 2 2v2" fill="none" stroke="#2e7fc4" stroke-width="1.3"/><path d="M10 4l2 2 2-2" fill="#2e7fc4"/><rect x="6" y="7" width="6.5" height="4.5" fill="#2e7fc4"/></svg>
<div class="a" style="left:352px;top:669px;width:928px;height:104.5px;background:#fff;border-left:1px solid #e6e6e6;border-top:1px solid #e6e6e6;box-sizing:border-box;"></div>
<div class="a" style="left:352.5px;top:670px;width:90.5px;height:21px;background:#f1f1f1;"></div>
<div class="a" style="left:443px;top:670px;width:1px;height:21px;background:#dcdcdc;"></div>
<div class="a" style="left:444px;top:690.5px;width:836px;height:1px;background:#e4e4e4;"></div>
<svg class="a" style="left:356px;top:672.5px;" width="13" height="15" viewBox="0 0 13 15"><rect x="0.5" y="0.5" width="11" height="14" rx="1" fill="#fff" stroke="#9bbcd8" stroke-width="1"/><circle cx="5" cy="4.5" r="2.8" fill="#e53935"/><path d="M3 9l2.5 5H0.5z" fill="#f5b82e"/><path d="M8 6v7" stroke="#9bbcd8" stroke-width="1"/></svg>
<div class="t" style="left:373.00px;top:671.00px;font-size:11.37px;color:#1e1e1e;">Problems</div>
<svg class="a" style="left:428.3px;top:677.5px;" width="8.5" height="8" viewBox="0 0 8.5 8"><path d="M1 1L8 8M8 1L1 8" stroke="#333" stroke-width="1.2"/></svg>
<svg class="a" style="left:1205.3px;top:674.3px;" width="11.5" height="13" viewBox="0 0 11.5 13"><path d="M0.6 0.6h10.3L7.2 5.5v7L4.3 11V5.5z" fill="#d6ebfa" stroke="#8ab4d8" stroke-width="1"/></svg>
<svg class="a" style="left:1228px;top:674.5px;" width="5" height="13" viewBox="0 0 5 13"><circle cx="2.5" cy="2" r="1.7" fill="none" stroke="#555" stroke-width="1"/><circle cx="2.5" cy="6.3" r="1.7" fill="none" stroke="#555" stroke-width="1"/><circle cx="2.5" cy="10.6" r="1.7" fill="none" stroke="#555" stroke-width="1"/></svg>
<svg class="a" style="left:1245px;top:676.3px;" width="8.5" height="3.8" viewBox="0 0 8.5 3.8"><rect x="0.6" y="0.6" width="7.3" height="2.6" rx="1" fill="none" stroke="#2a2a2a" stroke-width="1.2"/></svg>
<svg class="a" style="left:1263.7px;top:676.3px;" width="8.8" height="8.6" viewBox="0 0 8.8 8.6"><rect x="0.6" y="0.6" width="7.6" height="7.4" rx="0.8" fill="none" stroke="#2a2a2a" stroke-width="1.2"/><path d="M0.6 2.2h7.6" stroke="#2a2a2a" stroke-width="1.1"/></svg>
<div class="t" style="left:354.50px;top:687.80px;font-size:10.84px;color:#1e1e1e;">0 errors, 1 warning, 0 others</div>
<div class="a" style="left:352.5px;top:705.5px;width:927.5px;height:1px;background:#eeeeee;"></div>
<div class="a" style="left:352.5px;top:729px;width:927.5px;height:1px;background:#e2e2e2;"></div>
<div class="t" style="left:354.50px;top:708.80px;font-size:10.10px;color:#222;">Description</div>
<svg class="a" style="left:640.5px;top:716px;" width="6" height="4" viewBox="0 0 6 4"><path d="M0.5 3.5L3 1l2.5 2.5" fill="none" stroke="#888" stroke-width="0.9"/></svg>
<div class="a" style="left:651.0px;top:707px;width:1px;height:66px;background:#e6e6e6;"></div>
<div class="a" style="left:740.5px;top:707px;width:1px;height:66px;background:#e6e6e6;"></div>
<div class="a" style="left:860.8px;top:707px;width:1px;height:66px;background:#e6e6e6;"></div>
<div class="a" style="left:950.3px;top:707px;width:1px;height:66px;background:#e6e6e6;"></div>
<div class="a" style="left:1039.5px;top:707px;width:1px;height:66px;background:#e6e6e6;"></div>
<div class="t" style="left:653.50px;top:708.80px;font-size:9.81px;color:#222;">Resource</div>
<div class="t" style="left:743.60px;top:708.80px;font-size:9.97px;color:#222;">Path</div>
<div class="t" style="left:863.00px;top:708.80px;font-size:10.05px;color:#222;">Location</div>
<div class="t" style="left:953.00px;top:708.80px;font-size:9.92px;color:#222;">Type</div>
<svg class="a" style="left:356.5px;top:737.0px;" width="6" height="7" viewBox="0 0 6 7"><path d="M0.7 0.6L3.9 3.5L0.7 6.4" fill="none" stroke="#666" stroke-width="1.1"/></svg>
<svg class="a" style="left:371.5px;top:734.5px;" width="12" height="11" viewBox="0 0 12 11"><path d="M6 0.5L11.5 10.5H0.5Z" fill="#f5c342" stroke="#d9a21b" stroke-width="0.8"/><path d="M6 3.5v4" stroke="#333" stroke-width="1.2"/><circle cx="6" cy="9" r="0.7" fill="#333"/></svg>
<div class="t" style="left:386.00px;top:730.50px;font-size:11.46px;color:#1e1e1e;">Warnings (1 item)</div>
<div class="a" style="left:352.5px;top:751px;width:927.5px;height:22px;background:#f3f3f3;"></div>
<div class="a" style="left:651.0px;top:751px;width:1px;height:22px;background:#e0e0e0;"></div>
<div class="a" style="left:740.5px;top:751px;width:1px;height:22px;background:#e0e0e0;"></div>
<div class="a" style="left:860.8px;top:751px;width:1px;height:22px;background:#e0e0e0;"></div>
<div class="a" style="left:950.3px;top:751px;width:1px;height:22px;background:#e0e0e0;"></div>
<div class="a" style="left:1039.5px;top:751px;width:1px;height:22px;background:#e0e0e0;"></div></body></html>
